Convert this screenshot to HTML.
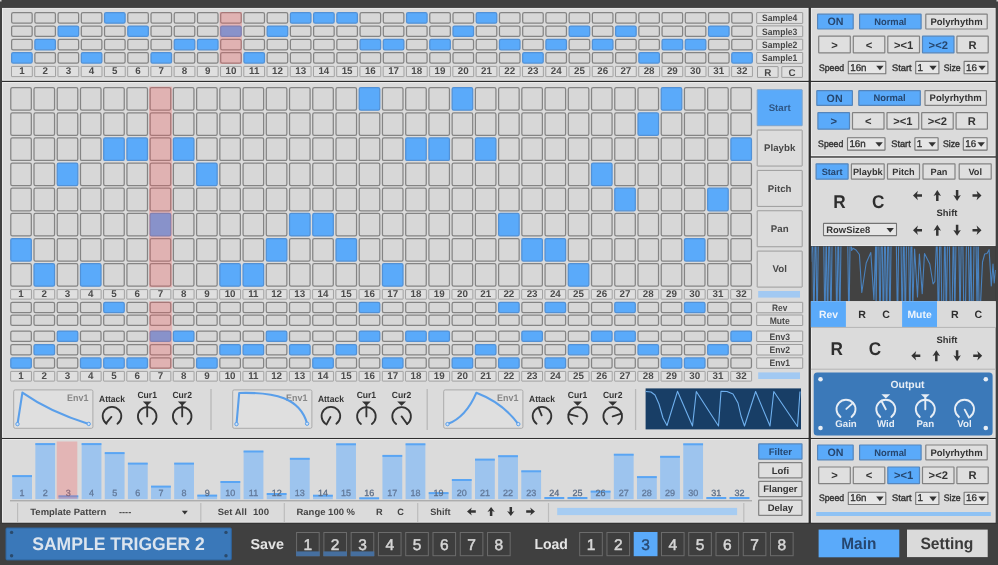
<!DOCTYPE html>
<html><head><meta charset="utf-8"><title>Sample Trigger 2</title>
<style>html,body{margin:0;padding:0;background:#404040;overflow:hidden}svg{display:block;will-change:transform}text{font-family:"Liberation Sans",sans-serif}</style>
</head><body><svg width="998" height="565" viewBox="0 0 998 565" font-family="Liberation Sans, sans-serif" text-rendering="geometricPrecision"><rect width="998" height="565" fill="#404040"/>
<rect x="0" y="0" width="1.5" height="1.5" fill="#cfcfcf"/>
<rect x="0" y="7" width="998" height="516.6" fill="#2e2e2e"/>
<rect x="2.00" y="7.70" width="806.60" height="73.10" fill="#ebebeb" />
<rect x="3.00" y="8.70" width="804.60" height="71.10" fill="#dbdbdb" />
<rect x="2.00" y="82.00" width="806.60" height="355.90" fill="#ebebeb" />
<rect x="3.00" y="83.00" width="804.60" height="353.90" fill="#dbdbdb" />
<rect x="2.00" y="439.00" width="806.60" height="83.70" fill="#ebebeb" />
<rect x="3.00" y="440.00" width="804.60" height="81.70" fill="#dbdbdb" />
<rect x="810.90" y="7.70" width="184.90" height="73.10" fill="#ebebeb" />
<rect x="811.90" y="8.70" width="182.90" height="71.10" fill="#dbdbdb" />
<rect x="810.90" y="82.00" width="184.90" height="74.10" fill="#ebebeb" />
<rect x="811.90" y="83.00" width="182.90" height="72.10" fill="#dbdbdb" />
<rect x="810.90" y="157.60" width="184.90" height="88.60" fill="#ebebeb" />
<rect x="811.90" y="158.60" width="182.90" height="86.60" fill="#dbdbdb" />
<rect x="810.90" y="156.10" width="184.90" height="1.50" fill="#6a6a6a" />
<rect x="810.90" y="246.20" width="184.90" height="55.00" fill="#424242" />
<rect x="810.90" y="301.20" width="184.90" height="136.70" fill="#ebebeb" />
<rect x="811.90" y="302.20" width="182.90" height="134.70" fill="#dbdbdb" />
<rect x="810.90" y="439.00" width="184.90" height="83.70" fill="#ebebeb" />
<rect x="811.90" y="440.00" width="182.90" height="81.70" fill="#dbdbdb" />
<rect x="0" y="0" width="998" height="7.7" fill="#404040"/>
<rect x="0" y="7" width="2" height="516.6" fill="#404040"/>
<rect x="995.8" y="7" width="2.2" height="516.6" fill="#404040"/>
<rect x="0" y="0" width="1.5" height="1.5" fill="#cfcfcf"/>
<rect x="996.5" y="0" width="1.5" height="1.5" fill="#cfcfcf"/>
<rect x="11.62" y="12.72" width="20.55" height="10.45" fill="#d7d7d7" stroke="#848484" stroke-width="1.25" rx="1.6" />
<rect x="34.86" y="12.72" width="20.55" height="10.45" fill="#d7d7d7" stroke="#848484" stroke-width="1.25" rx="1.6" />
<rect x="58.09" y="12.72" width="20.55" height="10.45" fill="#d7d7d7" stroke="#848484" stroke-width="1.25" rx="1.6" />
<rect x="81.31" y="12.72" width="20.55" height="10.45" fill="#d7d7d7" stroke="#848484" stroke-width="1.25" rx="1.6" />
<rect x="104.55" y="12.72" width="20.55" height="10.45" fill="#5aaafa" stroke="#5291d6" stroke-width="1.25" rx="1.6" />
<rect x="127.78" y="12.72" width="20.55" height="10.45" fill="#d7d7d7" stroke="#848484" stroke-width="1.25" rx="1.6" />
<rect x="151.00" y="12.72" width="20.55" height="10.45" fill="#d7d7d7" stroke="#848484" stroke-width="1.25" rx="1.6" />
<rect x="174.24" y="12.72" width="20.55" height="10.45" fill="#d7d7d7" stroke="#848484" stroke-width="1.25" rx="1.6" />
<rect x="197.47" y="12.72" width="20.55" height="10.45" fill="#d7d7d7" stroke="#848484" stroke-width="1.25" rx="1.6" />
<rect x="220.69" y="12.72" width="20.55" height="10.45" fill="#d7d7d7" stroke="#848484" stroke-width="1.25" rx="1.6" />
<rect x="243.93" y="12.72" width="20.55" height="10.45" fill="#d7d7d7" stroke="#848484" stroke-width="1.25" rx="1.6" />
<rect x="267.15" y="12.72" width="20.55" height="10.45" fill="#d7d7d7" stroke="#848484" stroke-width="1.25" rx="1.6" />
<rect x="290.38" y="12.72" width="20.55" height="10.45" fill="#5aaafa" stroke="#5291d6" stroke-width="1.25" rx="1.6" />
<rect x="313.62" y="12.72" width="20.55" height="10.45" fill="#5aaafa" stroke="#5291d6" stroke-width="1.25" rx="1.6" />
<rect x="336.85" y="12.72" width="20.55" height="10.45" fill="#5aaafa" stroke="#5291d6" stroke-width="1.25" rx="1.6" />
<rect x="360.07" y="12.72" width="20.55" height="10.45" fill="#d7d7d7" stroke="#848484" stroke-width="1.25" rx="1.6" />
<rect x="383.31" y="12.72" width="20.55" height="10.45" fill="#d7d7d7" stroke="#848484" stroke-width="1.25" rx="1.6" />
<rect x="406.54" y="12.72" width="20.55" height="10.45" fill="#5aaafa" stroke="#5291d6" stroke-width="1.25" rx="1.6" />
<rect x="429.76" y="12.72" width="20.55" height="10.45" fill="#d7d7d7" stroke="#848484" stroke-width="1.25" rx="1.6" />
<rect x="453.00" y="12.72" width="20.55" height="10.45" fill="#d7d7d7" stroke="#848484" stroke-width="1.25" rx="1.6" />
<rect x="476.23" y="12.72" width="20.55" height="10.45" fill="#5aaafa" stroke="#5291d6" stroke-width="1.25" rx="1.6" />
<rect x="499.45" y="12.72" width="20.55" height="10.45" fill="#d7d7d7" stroke="#848484" stroke-width="1.25" rx="1.6" />
<rect x="522.68" y="12.72" width="20.55" height="10.45" fill="#d7d7d7" stroke="#848484" stroke-width="1.25" rx="1.6" />
<rect x="545.91" y="12.72" width="20.55" height="10.45" fill="#d7d7d7" stroke="#848484" stroke-width="1.25" rx="1.6" />
<rect x="569.14" y="12.72" width="20.55" height="10.45" fill="#d7d7d7" stroke="#848484" stroke-width="1.25" rx="1.6" />
<rect x="592.38" y="12.72" width="20.55" height="10.45" fill="#d7d7d7" stroke="#848484" stroke-width="1.25" rx="1.6" />
<rect x="615.61" y="12.72" width="20.55" height="10.45" fill="#d7d7d7" stroke="#848484" stroke-width="1.25" rx="1.6" />
<rect x="638.84" y="12.72" width="20.55" height="10.45" fill="#d7d7d7" stroke="#848484" stroke-width="1.25" rx="1.6" />
<rect x="662.07" y="12.72" width="20.55" height="10.45" fill="#d7d7d7" stroke="#848484" stroke-width="1.25" rx="1.6" />
<rect x="685.29" y="12.72" width="20.55" height="10.45" fill="#d7d7d7" stroke="#848484" stroke-width="1.25" rx="1.6" />
<rect x="708.52" y="12.72" width="20.55" height="10.45" fill="#d7d7d7" stroke="#848484" stroke-width="1.25" rx="1.6" />
<rect x="731.75" y="12.72" width="20.55" height="10.45" fill="#d7d7d7" stroke="#848484" stroke-width="1.25" rx="1.6" />
<rect x="11.62" y="26.02" width="20.55" height="10.45" fill="#d7d7d7" stroke="#848484" stroke-width="1.25" rx="1.6" />
<rect x="34.86" y="26.02" width="20.55" height="10.45" fill="#d7d7d7" stroke="#848484" stroke-width="1.25" rx="1.6" />
<rect x="58.09" y="26.02" width="20.55" height="10.45" fill="#5aaafa" stroke="#5291d6" stroke-width="1.25" rx="1.6" />
<rect x="81.31" y="26.02" width="20.55" height="10.45" fill="#d7d7d7" stroke="#848484" stroke-width="1.25" rx="1.6" />
<rect x="104.55" y="26.02" width="20.55" height="10.45" fill="#d7d7d7" stroke="#848484" stroke-width="1.25" rx="1.6" />
<rect x="127.78" y="26.02" width="20.55" height="10.45" fill="#5aaafa" stroke="#5291d6" stroke-width="1.25" rx="1.6" />
<rect x="151.00" y="26.02" width="20.55" height="10.45" fill="#d7d7d7" stroke="#848484" stroke-width="1.25" rx="1.6" />
<rect x="174.24" y="26.02" width="20.55" height="10.45" fill="#d7d7d7" stroke="#848484" stroke-width="1.25" rx="1.6" />
<rect x="197.47" y="26.02" width="20.55" height="10.45" fill="#d7d7d7" stroke="#848484" stroke-width="1.25" rx="1.6" />
<rect x="220.69" y="26.02" width="20.55" height="10.45" fill="#5aaafa" stroke="#5291d6" stroke-width="1.25" rx="1.6" />
<rect x="243.93" y="26.02" width="20.55" height="10.45" fill="#d7d7d7" stroke="#848484" stroke-width="1.25" rx="1.6" />
<rect x="267.15" y="26.02" width="20.55" height="10.45" fill="#5aaafa" stroke="#5291d6" stroke-width="1.25" rx="1.6" />
<rect x="290.38" y="26.02" width="20.55" height="10.45" fill="#d7d7d7" stroke="#848484" stroke-width="1.25" rx="1.6" />
<rect x="313.62" y="26.02" width="20.55" height="10.45" fill="#d7d7d7" stroke="#848484" stroke-width="1.25" rx="1.6" />
<rect x="336.85" y="26.02" width="20.55" height="10.45" fill="#d7d7d7" stroke="#848484" stroke-width="1.25" rx="1.6" />
<rect x="360.07" y="26.02" width="20.55" height="10.45" fill="#d7d7d7" stroke="#848484" stroke-width="1.25" rx="1.6" />
<rect x="383.31" y="26.02" width="20.55" height="10.45" fill="#d7d7d7" stroke="#848484" stroke-width="1.25" rx="1.6" />
<rect x="406.54" y="26.02" width="20.55" height="10.45" fill="#d7d7d7" stroke="#848484" stroke-width="1.25" rx="1.6" />
<rect x="429.76" y="26.02" width="20.55" height="10.45" fill="#d7d7d7" stroke="#848484" stroke-width="1.25" rx="1.6" />
<rect x="453.00" y="26.02" width="20.55" height="10.45" fill="#5aaafa" stroke="#5291d6" stroke-width="1.25" rx="1.6" />
<rect x="476.23" y="26.02" width="20.55" height="10.45" fill="#d7d7d7" stroke="#848484" stroke-width="1.25" rx="1.6" />
<rect x="499.45" y="26.02" width="20.55" height="10.45" fill="#d7d7d7" stroke="#848484" stroke-width="1.25" rx="1.6" />
<rect x="522.68" y="26.02" width="20.55" height="10.45" fill="#d7d7d7" stroke="#848484" stroke-width="1.25" rx="1.6" />
<rect x="545.91" y="26.02" width="20.55" height="10.45" fill="#d7d7d7" stroke="#848484" stroke-width="1.25" rx="1.6" />
<rect x="569.14" y="26.02" width="20.55" height="10.45" fill="#5aaafa" stroke="#5291d6" stroke-width="1.25" rx="1.6" />
<rect x="592.38" y="26.02" width="20.55" height="10.45" fill="#d7d7d7" stroke="#848484" stroke-width="1.25" rx="1.6" />
<rect x="615.61" y="26.02" width="20.55" height="10.45" fill="#5aaafa" stroke="#5291d6" stroke-width="1.25" rx="1.6" />
<rect x="638.84" y="26.02" width="20.55" height="10.45" fill="#d7d7d7" stroke="#848484" stroke-width="1.25" rx="1.6" />
<rect x="662.07" y="26.02" width="20.55" height="10.45" fill="#d7d7d7" stroke="#848484" stroke-width="1.25" rx="1.6" />
<rect x="685.29" y="26.02" width="20.55" height="10.45" fill="#d7d7d7" stroke="#848484" stroke-width="1.25" rx="1.6" />
<rect x="708.52" y="26.02" width="20.55" height="10.45" fill="#5aaafa" stroke="#5291d6" stroke-width="1.25" rx="1.6" />
<rect x="731.75" y="26.02" width="20.55" height="10.45" fill="#d7d7d7" stroke="#848484" stroke-width="1.25" rx="1.6" />
<rect x="11.62" y="39.33" width="20.55" height="10.45" fill="#d7d7d7" stroke="#848484" stroke-width="1.25" rx="1.6" />
<rect x="34.86" y="39.33" width="20.55" height="10.45" fill="#5aaafa" stroke="#5291d6" stroke-width="1.25" rx="1.6" />
<rect x="58.09" y="39.33" width="20.55" height="10.45" fill="#d7d7d7" stroke="#848484" stroke-width="1.25" rx="1.6" />
<rect x="81.31" y="39.33" width="20.55" height="10.45" fill="#d7d7d7" stroke="#848484" stroke-width="1.25" rx="1.6" />
<rect x="104.55" y="39.33" width="20.55" height="10.45" fill="#d7d7d7" stroke="#848484" stroke-width="1.25" rx="1.6" />
<rect x="127.78" y="39.33" width="20.55" height="10.45" fill="#d7d7d7" stroke="#848484" stroke-width="1.25" rx="1.6" />
<rect x="151.00" y="39.33" width="20.55" height="10.45" fill="#d7d7d7" stroke="#848484" stroke-width="1.25" rx="1.6" />
<rect x="174.24" y="39.33" width="20.55" height="10.45" fill="#5aaafa" stroke="#5291d6" stroke-width="1.25" rx="1.6" />
<rect x="197.47" y="39.33" width="20.55" height="10.45" fill="#5aaafa" stroke="#5291d6" stroke-width="1.25" rx="1.6" />
<rect x="220.69" y="39.33" width="20.55" height="10.45" fill="#d7d7d7" stroke="#848484" stroke-width="1.25" rx="1.6" />
<rect x="243.93" y="39.33" width="20.55" height="10.45" fill="#d7d7d7" stroke="#848484" stroke-width="1.25" rx="1.6" />
<rect x="267.15" y="39.33" width="20.55" height="10.45" fill="#d7d7d7" stroke="#848484" stroke-width="1.25" rx="1.6" />
<rect x="290.38" y="39.33" width="20.55" height="10.45" fill="#d7d7d7" stroke="#848484" stroke-width="1.25" rx="1.6" />
<rect x="313.62" y="39.33" width="20.55" height="10.45" fill="#d7d7d7" stroke="#848484" stroke-width="1.25" rx="1.6" />
<rect x="336.85" y="39.33" width="20.55" height="10.45" fill="#d7d7d7" stroke="#848484" stroke-width="1.25" rx="1.6" />
<rect x="360.07" y="39.33" width="20.55" height="10.45" fill="#5aaafa" stroke="#5291d6" stroke-width="1.25" rx="1.6" />
<rect x="383.31" y="39.33" width="20.55" height="10.45" fill="#5aaafa" stroke="#5291d6" stroke-width="1.25" rx="1.6" />
<rect x="406.54" y="39.33" width="20.55" height="10.45" fill="#d7d7d7" stroke="#848484" stroke-width="1.25" rx="1.6" />
<rect x="429.76" y="39.33" width="20.55" height="10.45" fill="#5aaafa" stroke="#5291d6" stroke-width="1.25" rx="1.6" />
<rect x="453.00" y="39.33" width="20.55" height="10.45" fill="#d7d7d7" stroke="#848484" stroke-width="1.25" rx="1.6" />
<rect x="476.23" y="39.33" width="20.55" height="10.45" fill="#d7d7d7" stroke="#848484" stroke-width="1.25" rx="1.6" />
<rect x="499.45" y="39.33" width="20.55" height="10.45" fill="#5aaafa" stroke="#5291d6" stroke-width="1.25" rx="1.6" />
<rect x="522.68" y="39.33" width="20.55" height="10.45" fill="#d7d7d7" stroke="#848484" stroke-width="1.25" rx="1.6" />
<rect x="545.91" y="39.33" width="20.55" height="10.45" fill="#5aaafa" stroke="#5291d6" stroke-width="1.25" rx="1.6" />
<rect x="569.14" y="39.33" width="20.55" height="10.45" fill="#d7d7d7" stroke="#848484" stroke-width="1.25" rx="1.6" />
<rect x="592.38" y="39.33" width="20.55" height="10.45" fill="#5aaafa" stroke="#5291d6" stroke-width="1.25" rx="1.6" />
<rect x="615.61" y="39.33" width="20.55" height="10.45" fill="#d7d7d7" stroke="#848484" stroke-width="1.25" rx="1.6" />
<rect x="638.84" y="39.33" width="20.55" height="10.45" fill="#d7d7d7" stroke="#848484" stroke-width="1.25" rx="1.6" />
<rect x="662.07" y="39.33" width="20.55" height="10.45" fill="#5aaafa" stroke="#5291d6" stroke-width="1.25" rx="1.6" />
<rect x="685.29" y="39.33" width="20.55" height="10.45" fill="#5aaafa" stroke="#5291d6" stroke-width="1.25" rx="1.6" />
<rect x="708.52" y="39.33" width="20.55" height="10.45" fill="#d7d7d7" stroke="#848484" stroke-width="1.25" rx="1.6" />
<rect x="731.75" y="39.33" width="20.55" height="10.45" fill="#d7d7d7" stroke="#848484" stroke-width="1.25" rx="1.6" />
<rect x="11.62" y="52.62" width="20.55" height="10.45" fill="#5aaafa" stroke="#5291d6" stroke-width="1.25" rx="1.6" />
<rect x="34.86" y="52.62" width="20.55" height="10.45" fill="#d7d7d7" stroke="#848484" stroke-width="1.25" rx="1.6" />
<rect x="58.09" y="52.62" width="20.55" height="10.45" fill="#d7d7d7" stroke="#848484" stroke-width="1.25" rx="1.6" />
<rect x="81.31" y="52.62" width="20.55" height="10.45" fill="#5aaafa" stroke="#5291d6" stroke-width="1.25" rx="1.6" />
<rect x="104.55" y="52.62" width="20.55" height="10.45" fill="#d7d7d7" stroke="#848484" stroke-width="1.25" rx="1.6" />
<rect x="127.78" y="52.62" width="20.55" height="10.45" fill="#d7d7d7" stroke="#848484" stroke-width="1.25" rx="1.6" />
<rect x="151.00" y="52.62" width="20.55" height="10.45" fill="#5aaafa" stroke="#5291d6" stroke-width="1.25" rx="1.6" />
<rect x="174.24" y="52.62" width="20.55" height="10.45" fill="#d7d7d7" stroke="#848484" stroke-width="1.25" rx="1.6" />
<rect x="197.47" y="52.62" width="20.55" height="10.45" fill="#d7d7d7" stroke="#848484" stroke-width="1.25" rx="1.6" />
<rect x="220.69" y="52.62" width="20.55" height="10.45" fill="#d7d7d7" stroke="#848484" stroke-width="1.25" rx="1.6" />
<rect x="243.93" y="52.62" width="20.55" height="10.45" fill="#5aaafa" stroke="#5291d6" stroke-width="1.25" rx="1.6" />
<rect x="267.15" y="52.62" width="20.55" height="10.45" fill="#d7d7d7" stroke="#848484" stroke-width="1.25" rx="1.6" />
<rect x="290.38" y="52.62" width="20.55" height="10.45" fill="#d7d7d7" stroke="#848484" stroke-width="1.25" rx="1.6" />
<rect x="313.62" y="52.62" width="20.55" height="10.45" fill="#d7d7d7" stroke="#848484" stroke-width="1.25" rx="1.6" />
<rect x="336.85" y="52.62" width="20.55" height="10.45" fill="#d7d7d7" stroke="#848484" stroke-width="1.25" rx="1.6" />
<rect x="360.07" y="52.62" width="20.55" height="10.45" fill="#d7d7d7" stroke="#848484" stroke-width="1.25" rx="1.6" />
<rect x="383.31" y="52.62" width="20.55" height="10.45" fill="#d7d7d7" stroke="#848484" stroke-width="1.25" rx="1.6" />
<rect x="406.54" y="52.62" width="20.55" height="10.45" fill="#d7d7d7" stroke="#848484" stroke-width="1.25" rx="1.6" />
<rect x="429.76" y="52.62" width="20.55" height="10.45" fill="#d7d7d7" stroke="#848484" stroke-width="1.25" rx="1.6" />
<rect x="453.00" y="52.62" width="20.55" height="10.45" fill="#d7d7d7" stroke="#848484" stroke-width="1.25" rx="1.6" />
<rect x="476.23" y="52.62" width="20.55" height="10.45" fill="#d7d7d7" stroke="#848484" stroke-width="1.25" rx="1.6" />
<rect x="499.45" y="52.62" width="20.55" height="10.45" fill="#d7d7d7" stroke="#848484" stroke-width="1.25" rx="1.6" />
<rect x="522.68" y="52.62" width="20.55" height="10.45" fill="#5aaafa" stroke="#5291d6" stroke-width="1.25" rx="1.6" />
<rect x="545.91" y="52.62" width="20.55" height="10.45" fill="#d7d7d7" stroke="#848484" stroke-width="1.25" rx="1.6" />
<rect x="569.14" y="52.62" width="20.55" height="10.45" fill="#d7d7d7" stroke="#848484" stroke-width="1.25" rx="1.6" />
<rect x="592.38" y="52.62" width="20.55" height="10.45" fill="#d7d7d7" stroke="#848484" stroke-width="1.25" rx="1.6" />
<rect x="615.61" y="52.62" width="20.55" height="10.45" fill="#d7d7d7" stroke="#848484" stroke-width="1.25" rx="1.6" />
<rect x="638.84" y="52.62" width="20.55" height="10.45" fill="#5aaafa" stroke="#5291d6" stroke-width="1.25" rx="1.6" />
<rect x="662.07" y="52.62" width="20.55" height="10.45" fill="#d7d7d7" stroke="#848484" stroke-width="1.25" rx="1.6" />
<rect x="685.29" y="52.62" width="20.55" height="10.45" fill="#d7d7d7" stroke="#848484" stroke-width="1.25" rx="1.6" />
<rect x="708.52" y="52.62" width="20.55" height="10.45" fill="#d7d7d7" stroke="#848484" stroke-width="1.25" rx="1.6" />
<rect x="731.75" y="52.62" width="20.55" height="10.45" fill="#5aaafa" stroke="#5291d6" stroke-width="1.25" rx="1.6" />
<rect x="11.50" y="66.40" width="20.80" height="10.20" fill="#dfdfdf" stroke="#a2a2a2" stroke-width="1" rx="0.3" />
<text x="21.90" y="74.10" font-size="9.8" font-weight="bold" fill="#4c4c4c" text-anchor="middle" >1</text>
<rect x="34.73" y="66.40" width="20.80" height="10.20" fill="#dfdfdf" stroke="#a2a2a2" stroke-width="1" rx="0.3" />
<text x="45.13" y="74.10" font-size="9.8" font-weight="bold" fill="#4c4c4c" text-anchor="middle" >2</text>
<rect x="57.96" y="66.40" width="20.80" height="10.20" fill="#dfdfdf" stroke="#a2a2a2" stroke-width="1" rx="0.3" />
<text x="68.36" y="74.10" font-size="9.8" font-weight="bold" fill="#4c4c4c" text-anchor="middle" >3</text>
<rect x="81.19" y="66.40" width="20.80" height="10.20" fill="#dfdfdf" stroke="#a2a2a2" stroke-width="1" rx="0.3" />
<text x="91.59" y="74.10" font-size="9.8" font-weight="bold" fill="#4c4c4c" text-anchor="middle" >4</text>
<rect x="104.42" y="66.40" width="20.80" height="10.20" fill="#dfdfdf" stroke="#a2a2a2" stroke-width="1" rx="0.3" />
<text x="114.82" y="74.10" font-size="9.8" font-weight="bold" fill="#4c4c4c" text-anchor="middle" >5</text>
<rect x="127.65" y="66.40" width="20.80" height="10.20" fill="#dfdfdf" stroke="#a2a2a2" stroke-width="1" rx="0.3" />
<text x="138.05" y="74.10" font-size="9.8" font-weight="bold" fill="#4c4c4c" text-anchor="middle" >6</text>
<rect x="150.88" y="66.40" width="20.80" height="10.20" fill="#dfdfdf" stroke="#a2a2a2" stroke-width="1" rx="0.3" />
<text x="161.28" y="74.10" font-size="9.8" font-weight="bold" fill="#4c4c4c" text-anchor="middle" >7</text>
<rect x="174.11" y="66.40" width="20.80" height="10.20" fill="#dfdfdf" stroke="#a2a2a2" stroke-width="1" rx="0.3" />
<text x="184.51" y="74.10" font-size="9.8" font-weight="bold" fill="#4c4c4c" text-anchor="middle" >8</text>
<rect x="197.34" y="66.40" width="20.80" height="10.20" fill="#dfdfdf" stroke="#a2a2a2" stroke-width="1" rx="0.3" />
<text x="207.74" y="74.10" font-size="9.8" font-weight="bold" fill="#4c4c4c" text-anchor="middle" >9</text>
<rect x="220.57" y="66.40" width="20.80" height="10.20" fill="#dfdfdf" stroke="#a2a2a2" stroke-width="1" rx="0.3" />
<text x="230.97" y="74.10" font-size="9.8" font-weight="bold" fill="#4c4c4c" text-anchor="middle" >10</text>
<rect x="243.80" y="66.40" width="20.80" height="10.20" fill="#dfdfdf" stroke="#a2a2a2" stroke-width="1" rx="0.3" />
<text x="254.20" y="74.10" font-size="9.8" font-weight="bold" fill="#4c4c4c" text-anchor="middle" >11</text>
<rect x="267.03" y="66.40" width="20.80" height="10.20" fill="#dfdfdf" stroke="#a2a2a2" stroke-width="1" rx="0.3" />
<text x="277.43" y="74.10" font-size="9.8" font-weight="bold" fill="#4c4c4c" text-anchor="middle" >12</text>
<rect x="290.26" y="66.40" width="20.80" height="10.20" fill="#dfdfdf" stroke="#a2a2a2" stroke-width="1" rx="0.3" />
<text x="300.66" y="74.10" font-size="9.8" font-weight="bold" fill="#4c4c4c" text-anchor="middle" >13</text>
<rect x="313.49" y="66.40" width="20.80" height="10.20" fill="#dfdfdf" stroke="#a2a2a2" stroke-width="1" rx="0.3" />
<text x="323.89" y="74.10" font-size="9.8" font-weight="bold" fill="#4c4c4c" text-anchor="middle" >14</text>
<rect x="336.72" y="66.40" width="20.80" height="10.20" fill="#dfdfdf" stroke="#a2a2a2" stroke-width="1" rx="0.3" />
<text x="347.12" y="74.10" font-size="9.8" font-weight="bold" fill="#4c4c4c" text-anchor="middle" >15</text>
<rect x="359.95" y="66.40" width="20.80" height="10.20" fill="#dfdfdf" stroke="#a2a2a2" stroke-width="1" rx="0.3" />
<text x="370.35" y="74.10" font-size="9.8" font-weight="bold" fill="#4c4c4c" text-anchor="middle" >16</text>
<rect x="383.18" y="66.40" width="20.80" height="10.20" fill="#dfdfdf" stroke="#a2a2a2" stroke-width="1" rx="0.3" />
<text x="393.58" y="74.10" font-size="9.8" font-weight="bold" fill="#4c4c4c" text-anchor="middle" >17</text>
<rect x="406.41" y="66.40" width="20.80" height="10.20" fill="#dfdfdf" stroke="#a2a2a2" stroke-width="1" rx="0.3" />
<text x="416.81" y="74.10" font-size="9.8" font-weight="bold" fill="#4c4c4c" text-anchor="middle" >18</text>
<rect x="429.64" y="66.40" width="20.80" height="10.20" fill="#dfdfdf" stroke="#a2a2a2" stroke-width="1" rx="0.3" />
<text x="440.04" y="74.10" font-size="9.8" font-weight="bold" fill="#4c4c4c" text-anchor="middle" >19</text>
<rect x="452.87" y="66.40" width="20.80" height="10.20" fill="#dfdfdf" stroke="#a2a2a2" stroke-width="1" rx="0.3" />
<text x="463.27" y="74.10" font-size="9.8" font-weight="bold" fill="#4c4c4c" text-anchor="middle" >20</text>
<rect x="476.10" y="66.40" width="20.80" height="10.20" fill="#dfdfdf" stroke="#a2a2a2" stroke-width="1" rx="0.3" />
<text x="486.50" y="74.10" font-size="9.8" font-weight="bold" fill="#4c4c4c" text-anchor="middle" >21</text>
<rect x="499.33" y="66.40" width="20.80" height="10.20" fill="#dfdfdf" stroke="#a2a2a2" stroke-width="1" rx="0.3" />
<text x="509.73" y="74.10" font-size="9.8" font-weight="bold" fill="#4c4c4c" text-anchor="middle" >22</text>
<rect x="522.56" y="66.40" width="20.80" height="10.20" fill="#dfdfdf" stroke="#a2a2a2" stroke-width="1" rx="0.3" />
<text x="532.96" y="74.10" font-size="9.8" font-weight="bold" fill="#4c4c4c" text-anchor="middle" >23</text>
<rect x="545.79" y="66.40" width="20.80" height="10.20" fill="#dfdfdf" stroke="#a2a2a2" stroke-width="1" rx="0.3" />
<text x="556.19" y="74.10" font-size="9.8" font-weight="bold" fill="#4c4c4c" text-anchor="middle" >24</text>
<rect x="569.02" y="66.40" width="20.80" height="10.20" fill="#dfdfdf" stroke="#a2a2a2" stroke-width="1" rx="0.3" />
<text x="579.42" y="74.10" font-size="9.8" font-weight="bold" fill="#4c4c4c" text-anchor="middle" >25</text>
<rect x="592.25" y="66.40" width="20.80" height="10.20" fill="#dfdfdf" stroke="#a2a2a2" stroke-width="1" rx="0.3" />
<text x="602.65" y="74.10" font-size="9.8" font-weight="bold" fill="#4c4c4c" text-anchor="middle" >26</text>
<rect x="615.48" y="66.40" width="20.80" height="10.20" fill="#dfdfdf" stroke="#a2a2a2" stroke-width="1" rx="0.3" />
<text x="625.88" y="74.10" font-size="9.8" font-weight="bold" fill="#4c4c4c" text-anchor="middle" >27</text>
<rect x="638.71" y="66.40" width="20.80" height="10.20" fill="#dfdfdf" stroke="#a2a2a2" stroke-width="1" rx="0.3" />
<text x="649.11" y="74.10" font-size="9.8" font-weight="bold" fill="#4c4c4c" text-anchor="middle" >28</text>
<rect x="661.94" y="66.40" width="20.80" height="10.20" fill="#dfdfdf" stroke="#a2a2a2" stroke-width="1" rx="0.3" />
<text x="672.34" y="74.10" font-size="9.8" font-weight="bold" fill="#4c4c4c" text-anchor="middle" >29</text>
<rect x="685.17" y="66.40" width="20.80" height="10.20" fill="#dfdfdf" stroke="#a2a2a2" stroke-width="1" rx="0.3" />
<text x="695.57" y="74.10" font-size="9.8" font-weight="bold" fill="#4c4c4c" text-anchor="middle" >30</text>
<rect x="708.40" y="66.40" width="20.80" height="10.20" fill="#dfdfdf" stroke="#a2a2a2" stroke-width="1" rx="0.3" />
<text x="718.80" y="74.10" font-size="9.8" font-weight="bold" fill="#4c4c4c" text-anchor="middle" >31</text>
<rect x="731.63" y="66.40" width="20.80" height="10.20" fill="#dfdfdf" stroke="#a2a2a2" stroke-width="1" rx="0.3" />
<text x="742.03" y="74.10" font-size="9.8" font-weight="bold" fill="#4c4c4c" text-anchor="middle" >32</text>
<rect x="756.70" y="12.60" width="46.00" height="10.80" fill="#dfdfdf" stroke="#9c9c9c" stroke-width="1" rx="0.3" />
<text x="779.70" y="21.30" font-size="9.3" font-weight="bold" fill="#484848" text-anchor="middle" textLength="35.3" lengthAdjust="spacingAndGlyphs">Sample4</text>
<rect x="756.70" y="25.90" width="46.00" height="10.80" fill="#dfdfdf" stroke="#9c9c9c" stroke-width="1" rx="0.3" />
<text x="779.70" y="34.60" font-size="9.3" font-weight="bold" fill="#484848" text-anchor="middle" textLength="35.3" lengthAdjust="spacingAndGlyphs">Sample3</text>
<rect x="756.70" y="39.20" width="46.00" height="10.80" fill="#dfdfdf" stroke="#9c9c9c" stroke-width="1" rx="0.3" />
<text x="779.70" y="47.90" font-size="9.3" font-weight="bold" fill="#484848" text-anchor="middle" textLength="35.3" lengthAdjust="spacingAndGlyphs">Sample2</text>
<rect x="756.70" y="52.50" width="46.00" height="10.80" fill="#dfdfdf" stroke="#9c9c9c" stroke-width="1" rx="0.3" />
<text x="779.70" y="61.20" font-size="9.3" font-weight="bold" fill="#484848" text-anchor="middle" textLength="35.3" lengthAdjust="spacingAndGlyphs">Sample1</text>
<rect x="757.50" y="66.60" width="20.60" height="10.80" fill="#dfdfdf" stroke="#9c9c9c" stroke-width="1" rx="0.3" />
<text x="767.80" y="75.60" font-size="9.8" font-weight="bold" fill="#484848" text-anchor="middle" >R</text>
<rect x="781.80" y="66.60" width="20.60" height="10.80" fill="#dfdfdf" stroke="#9c9c9c" stroke-width="1" rx="0.3" />
<text x="792.10" y="75.60" font-size="9.8" font-weight="bold" fill="#484848" text-anchor="middle" >C</text>
<rect x="10.78" y="87.62" width="20.55" height="22.55" fill="#d7d7d7" stroke="#848484" stroke-width="1.25" rx="1.6" />
<rect x="34.01" y="87.62" width="20.55" height="22.55" fill="#d7d7d7" stroke="#848484" stroke-width="1.25" rx="1.6" />
<rect x="57.23" y="87.62" width="20.55" height="22.55" fill="#d7d7d7" stroke="#848484" stroke-width="1.25" rx="1.6" />
<rect x="80.47" y="87.62" width="20.55" height="22.55" fill="#d7d7d7" stroke="#848484" stroke-width="1.25" rx="1.6" />
<rect x="103.70" y="87.62" width="20.55" height="22.55" fill="#d7d7d7" stroke="#848484" stroke-width="1.25" rx="1.6" />
<rect x="126.93" y="87.62" width="20.55" height="22.55" fill="#d7d7d7" stroke="#848484" stroke-width="1.25" rx="1.6" />
<rect x="150.16" y="87.62" width="20.55" height="22.55" fill="#d7d7d7" stroke="#848484" stroke-width="1.25" rx="1.6" />
<rect x="173.39" y="87.62" width="20.55" height="22.55" fill="#d7d7d7" stroke="#848484" stroke-width="1.25" rx="1.6" />
<rect x="196.62" y="87.62" width="20.55" height="22.55" fill="#d7d7d7" stroke="#848484" stroke-width="1.25" rx="1.6" />
<rect x="219.84" y="87.62" width="20.55" height="22.55" fill="#d7d7d7" stroke="#848484" stroke-width="1.25" rx="1.6" />
<rect x="243.08" y="87.62" width="20.55" height="22.55" fill="#d7d7d7" stroke="#848484" stroke-width="1.25" rx="1.6" />
<rect x="266.30" y="87.62" width="20.55" height="22.55" fill="#d7d7d7" stroke="#848484" stroke-width="1.25" rx="1.6" />
<rect x="289.53" y="87.62" width="20.55" height="22.55" fill="#d7d7d7" stroke="#848484" stroke-width="1.25" rx="1.6" />
<rect x="312.76" y="87.62" width="20.55" height="22.55" fill="#d7d7d7" stroke="#848484" stroke-width="1.25" rx="1.6" />
<rect x="336.00" y="87.62" width="20.55" height="22.55" fill="#d7d7d7" stroke="#848484" stroke-width="1.25" rx="1.6" />
<rect x="359.22" y="87.62" width="20.55" height="22.55" fill="#5aaafa" stroke="#5291d6" stroke-width="1.25" rx="1.6" />
<rect x="382.45" y="87.62" width="20.55" height="22.55" fill="#d7d7d7" stroke="#848484" stroke-width="1.25" rx="1.6" />
<rect x="405.69" y="87.62" width="20.55" height="22.55" fill="#d7d7d7" stroke="#848484" stroke-width="1.25" rx="1.6" />
<rect x="428.91" y="87.62" width="20.55" height="22.55" fill="#d7d7d7" stroke="#848484" stroke-width="1.25" rx="1.6" />
<rect x="452.14" y="87.62" width="20.55" height="22.55" fill="#5aaafa" stroke="#5291d6" stroke-width="1.25" rx="1.6" />
<rect x="475.38" y="87.62" width="20.55" height="22.55" fill="#d7d7d7" stroke="#848484" stroke-width="1.25" rx="1.6" />
<rect x="498.60" y="87.62" width="20.55" height="22.55" fill="#d7d7d7" stroke="#848484" stroke-width="1.25" rx="1.6" />
<rect x="521.83" y="87.62" width="20.55" height="22.55" fill="#d7d7d7" stroke="#848484" stroke-width="1.25" rx="1.6" />
<rect x="545.06" y="87.62" width="20.55" height="22.55" fill="#d7d7d7" stroke="#848484" stroke-width="1.25" rx="1.6" />
<rect x="568.29" y="87.62" width="20.55" height="22.55" fill="#d7d7d7" stroke="#848484" stroke-width="1.25" rx="1.6" />
<rect x="591.52" y="87.62" width="20.55" height="22.55" fill="#d7d7d7" stroke="#848484" stroke-width="1.25" rx="1.6" />
<rect x="614.75" y="87.62" width="20.55" height="22.55" fill="#d7d7d7" stroke="#848484" stroke-width="1.25" rx="1.6" />
<rect x="637.99" y="87.62" width="20.55" height="22.55" fill="#d7d7d7" stroke="#848484" stroke-width="1.25" rx="1.6" />
<rect x="661.22" y="87.62" width="20.55" height="22.55" fill="#5aaafa" stroke="#5291d6" stroke-width="1.25" rx="1.6" />
<rect x="684.44" y="87.62" width="20.55" height="22.55" fill="#d7d7d7" stroke="#848484" stroke-width="1.25" rx="1.6" />
<rect x="707.67" y="87.62" width="20.55" height="22.55" fill="#d7d7d7" stroke="#848484" stroke-width="1.25" rx="1.6" />
<rect x="730.90" y="87.62" width="20.55" height="22.55" fill="#d7d7d7" stroke="#848484" stroke-width="1.25" rx="1.6" />
<rect x="10.78" y="112.78" width="20.55" height="22.55" fill="#d7d7d7" stroke="#848484" stroke-width="1.25" rx="1.6" />
<rect x="34.01" y="112.78" width="20.55" height="22.55" fill="#d7d7d7" stroke="#848484" stroke-width="1.25" rx="1.6" />
<rect x="57.23" y="112.78" width="20.55" height="22.55" fill="#d7d7d7" stroke="#848484" stroke-width="1.25" rx="1.6" />
<rect x="80.47" y="112.78" width="20.55" height="22.55" fill="#d7d7d7" stroke="#848484" stroke-width="1.25" rx="1.6" />
<rect x="103.70" y="112.78" width="20.55" height="22.55" fill="#d7d7d7" stroke="#848484" stroke-width="1.25" rx="1.6" />
<rect x="126.93" y="112.78" width="20.55" height="22.55" fill="#d7d7d7" stroke="#848484" stroke-width="1.25" rx="1.6" />
<rect x="150.16" y="112.78" width="20.55" height="22.55" fill="#d7d7d7" stroke="#848484" stroke-width="1.25" rx="1.6" />
<rect x="173.39" y="112.78" width="20.55" height="22.55" fill="#d7d7d7" stroke="#848484" stroke-width="1.25" rx="1.6" />
<rect x="196.62" y="112.78" width="20.55" height="22.55" fill="#d7d7d7" stroke="#848484" stroke-width="1.25" rx="1.6" />
<rect x="219.84" y="112.78" width="20.55" height="22.55" fill="#d7d7d7" stroke="#848484" stroke-width="1.25" rx="1.6" />
<rect x="243.08" y="112.78" width="20.55" height="22.55" fill="#d7d7d7" stroke="#848484" stroke-width="1.25" rx="1.6" />
<rect x="266.30" y="112.78" width="20.55" height="22.55" fill="#d7d7d7" stroke="#848484" stroke-width="1.25" rx="1.6" />
<rect x="289.53" y="112.78" width="20.55" height="22.55" fill="#d7d7d7" stroke="#848484" stroke-width="1.25" rx="1.6" />
<rect x="312.76" y="112.78" width="20.55" height="22.55" fill="#d7d7d7" stroke="#848484" stroke-width="1.25" rx="1.6" />
<rect x="336.00" y="112.78" width="20.55" height="22.55" fill="#d7d7d7" stroke="#848484" stroke-width="1.25" rx="1.6" />
<rect x="359.22" y="112.78" width="20.55" height="22.55" fill="#d7d7d7" stroke="#848484" stroke-width="1.25" rx="1.6" />
<rect x="382.45" y="112.78" width="20.55" height="22.55" fill="#d7d7d7" stroke="#848484" stroke-width="1.25" rx="1.6" />
<rect x="405.69" y="112.78" width="20.55" height="22.55" fill="#d7d7d7" stroke="#848484" stroke-width="1.25" rx="1.6" />
<rect x="428.91" y="112.78" width="20.55" height="22.55" fill="#d7d7d7" stroke="#848484" stroke-width="1.25" rx="1.6" />
<rect x="452.14" y="112.78" width="20.55" height="22.55" fill="#d7d7d7" stroke="#848484" stroke-width="1.25" rx="1.6" />
<rect x="475.38" y="112.78" width="20.55" height="22.55" fill="#d7d7d7" stroke="#848484" stroke-width="1.25" rx="1.6" />
<rect x="498.60" y="112.78" width="20.55" height="22.55" fill="#d7d7d7" stroke="#848484" stroke-width="1.25" rx="1.6" />
<rect x="521.83" y="112.78" width="20.55" height="22.55" fill="#d7d7d7" stroke="#848484" stroke-width="1.25" rx="1.6" />
<rect x="545.06" y="112.78" width="20.55" height="22.55" fill="#d7d7d7" stroke="#848484" stroke-width="1.25" rx="1.6" />
<rect x="568.29" y="112.78" width="20.55" height="22.55" fill="#d7d7d7" stroke="#848484" stroke-width="1.25" rx="1.6" />
<rect x="591.52" y="112.78" width="20.55" height="22.55" fill="#d7d7d7" stroke="#848484" stroke-width="1.25" rx="1.6" />
<rect x="614.75" y="112.78" width="20.55" height="22.55" fill="#d7d7d7" stroke="#848484" stroke-width="1.25" rx="1.6" />
<rect x="637.99" y="112.78" width="20.55" height="22.55" fill="#5aaafa" stroke="#5291d6" stroke-width="1.25" rx="1.6" />
<rect x="661.22" y="112.78" width="20.55" height="22.55" fill="#d7d7d7" stroke="#848484" stroke-width="1.25" rx="1.6" />
<rect x="684.44" y="112.78" width="20.55" height="22.55" fill="#d7d7d7" stroke="#848484" stroke-width="1.25" rx="1.6" />
<rect x="707.67" y="112.78" width="20.55" height="22.55" fill="#d7d7d7" stroke="#848484" stroke-width="1.25" rx="1.6" />
<rect x="730.90" y="112.78" width="20.55" height="22.55" fill="#d7d7d7" stroke="#848484" stroke-width="1.25" rx="1.6" />
<rect x="10.78" y="137.93" width="20.55" height="22.55" fill="#d7d7d7" stroke="#848484" stroke-width="1.25" rx="1.6" />
<rect x="34.01" y="137.93" width="20.55" height="22.55" fill="#d7d7d7" stroke="#848484" stroke-width="1.25" rx="1.6" />
<rect x="57.23" y="137.93" width="20.55" height="22.55" fill="#d7d7d7" stroke="#848484" stroke-width="1.25" rx="1.6" />
<rect x="80.47" y="137.93" width="20.55" height="22.55" fill="#d7d7d7" stroke="#848484" stroke-width="1.25" rx="1.6" />
<rect x="103.70" y="137.93" width="20.55" height="22.55" fill="#5aaafa" stroke="#5291d6" stroke-width="1.25" rx="1.6" />
<rect x="126.93" y="137.93" width="20.55" height="22.55" fill="#5aaafa" stroke="#5291d6" stroke-width="1.25" rx="1.6" />
<rect x="150.16" y="137.93" width="20.55" height="22.55" fill="#d7d7d7" stroke="#848484" stroke-width="1.25" rx="1.6" />
<rect x="173.39" y="137.93" width="20.55" height="22.55" fill="#5aaafa" stroke="#5291d6" stroke-width="1.25" rx="1.6" />
<rect x="196.62" y="137.93" width="20.55" height="22.55" fill="#d7d7d7" stroke="#848484" stroke-width="1.25" rx="1.6" />
<rect x="219.84" y="137.93" width="20.55" height="22.55" fill="#d7d7d7" stroke="#848484" stroke-width="1.25" rx="1.6" />
<rect x="243.08" y="137.93" width="20.55" height="22.55" fill="#d7d7d7" stroke="#848484" stroke-width="1.25" rx="1.6" />
<rect x="266.30" y="137.93" width="20.55" height="22.55" fill="#d7d7d7" stroke="#848484" stroke-width="1.25" rx="1.6" />
<rect x="289.53" y="137.93" width="20.55" height="22.55" fill="#d7d7d7" stroke="#848484" stroke-width="1.25" rx="1.6" />
<rect x="312.76" y="137.93" width="20.55" height="22.55" fill="#d7d7d7" stroke="#848484" stroke-width="1.25" rx="1.6" />
<rect x="336.00" y="137.93" width="20.55" height="22.55" fill="#d7d7d7" stroke="#848484" stroke-width="1.25" rx="1.6" />
<rect x="359.22" y="137.93" width="20.55" height="22.55" fill="#d7d7d7" stroke="#848484" stroke-width="1.25" rx="1.6" />
<rect x="382.45" y="137.93" width="20.55" height="22.55" fill="#d7d7d7" stroke="#848484" stroke-width="1.25" rx="1.6" />
<rect x="405.69" y="137.93" width="20.55" height="22.55" fill="#5aaafa" stroke="#5291d6" stroke-width="1.25" rx="1.6" />
<rect x="428.91" y="137.93" width="20.55" height="22.55" fill="#5aaafa" stroke="#5291d6" stroke-width="1.25" rx="1.6" />
<rect x="452.14" y="137.93" width="20.55" height="22.55" fill="#d7d7d7" stroke="#848484" stroke-width="1.25" rx="1.6" />
<rect x="475.38" y="137.93" width="20.55" height="22.55" fill="#5aaafa" stroke="#5291d6" stroke-width="1.25" rx="1.6" />
<rect x="498.60" y="137.93" width="20.55" height="22.55" fill="#d7d7d7" stroke="#848484" stroke-width="1.25" rx="1.6" />
<rect x="521.83" y="137.93" width="20.55" height="22.55" fill="#d7d7d7" stroke="#848484" stroke-width="1.25" rx="1.6" />
<rect x="545.06" y="137.93" width="20.55" height="22.55" fill="#d7d7d7" stroke="#848484" stroke-width="1.25" rx="1.6" />
<rect x="568.29" y="137.93" width="20.55" height="22.55" fill="#d7d7d7" stroke="#848484" stroke-width="1.25" rx="1.6" />
<rect x="591.52" y="137.93" width="20.55" height="22.55" fill="#d7d7d7" stroke="#848484" stroke-width="1.25" rx="1.6" />
<rect x="614.75" y="137.93" width="20.55" height="22.55" fill="#d7d7d7" stroke="#848484" stroke-width="1.25" rx="1.6" />
<rect x="637.99" y="137.93" width="20.55" height="22.55" fill="#d7d7d7" stroke="#848484" stroke-width="1.25" rx="1.6" />
<rect x="661.22" y="137.93" width="20.55" height="22.55" fill="#d7d7d7" stroke="#848484" stroke-width="1.25" rx="1.6" />
<rect x="684.44" y="137.93" width="20.55" height="22.55" fill="#d7d7d7" stroke="#848484" stroke-width="1.25" rx="1.6" />
<rect x="707.67" y="137.93" width="20.55" height="22.55" fill="#d7d7d7" stroke="#848484" stroke-width="1.25" rx="1.6" />
<rect x="730.90" y="137.93" width="20.55" height="22.55" fill="#5aaafa" stroke="#5291d6" stroke-width="1.25" rx="1.6" />
<rect x="10.78" y="163.07" width="20.55" height="22.55" fill="#d7d7d7" stroke="#848484" stroke-width="1.25" rx="1.6" />
<rect x="34.01" y="163.07" width="20.55" height="22.55" fill="#d7d7d7" stroke="#848484" stroke-width="1.25" rx="1.6" />
<rect x="57.23" y="163.07" width="20.55" height="22.55" fill="#5aaafa" stroke="#5291d6" stroke-width="1.25" rx="1.6" />
<rect x="80.47" y="163.07" width="20.55" height="22.55" fill="#d7d7d7" stroke="#848484" stroke-width="1.25" rx="1.6" />
<rect x="103.70" y="163.07" width="20.55" height="22.55" fill="#d7d7d7" stroke="#848484" stroke-width="1.25" rx="1.6" />
<rect x="126.93" y="163.07" width="20.55" height="22.55" fill="#d7d7d7" stroke="#848484" stroke-width="1.25" rx="1.6" />
<rect x="150.16" y="163.07" width="20.55" height="22.55" fill="#d7d7d7" stroke="#848484" stroke-width="1.25" rx="1.6" />
<rect x="173.39" y="163.07" width="20.55" height="22.55" fill="#d7d7d7" stroke="#848484" stroke-width="1.25" rx="1.6" />
<rect x="196.62" y="163.07" width="20.55" height="22.55" fill="#5aaafa" stroke="#5291d6" stroke-width="1.25" rx="1.6" />
<rect x="219.84" y="163.07" width="20.55" height="22.55" fill="#d7d7d7" stroke="#848484" stroke-width="1.25" rx="1.6" />
<rect x="243.08" y="163.07" width="20.55" height="22.55" fill="#d7d7d7" stroke="#848484" stroke-width="1.25" rx="1.6" />
<rect x="266.30" y="163.07" width="20.55" height="22.55" fill="#d7d7d7" stroke="#848484" stroke-width="1.25" rx="1.6" />
<rect x="289.53" y="163.07" width="20.55" height="22.55" fill="#d7d7d7" stroke="#848484" stroke-width="1.25" rx="1.6" />
<rect x="312.76" y="163.07" width="20.55" height="22.55" fill="#d7d7d7" stroke="#848484" stroke-width="1.25" rx="1.6" />
<rect x="336.00" y="163.07" width="20.55" height="22.55" fill="#d7d7d7" stroke="#848484" stroke-width="1.25" rx="1.6" />
<rect x="359.22" y="163.07" width="20.55" height="22.55" fill="#d7d7d7" stroke="#848484" stroke-width="1.25" rx="1.6" />
<rect x="382.45" y="163.07" width="20.55" height="22.55" fill="#d7d7d7" stroke="#848484" stroke-width="1.25" rx="1.6" />
<rect x="405.69" y="163.07" width="20.55" height="22.55" fill="#d7d7d7" stroke="#848484" stroke-width="1.25" rx="1.6" />
<rect x="428.91" y="163.07" width="20.55" height="22.55" fill="#d7d7d7" stroke="#848484" stroke-width="1.25" rx="1.6" />
<rect x="452.14" y="163.07" width="20.55" height="22.55" fill="#d7d7d7" stroke="#848484" stroke-width="1.25" rx="1.6" />
<rect x="475.38" y="163.07" width="20.55" height="22.55" fill="#d7d7d7" stroke="#848484" stroke-width="1.25" rx="1.6" />
<rect x="498.60" y="163.07" width="20.55" height="22.55" fill="#d7d7d7" stroke="#848484" stroke-width="1.25" rx="1.6" />
<rect x="521.83" y="163.07" width="20.55" height="22.55" fill="#d7d7d7" stroke="#848484" stroke-width="1.25" rx="1.6" />
<rect x="545.06" y="163.07" width="20.55" height="22.55" fill="#d7d7d7" stroke="#848484" stroke-width="1.25" rx="1.6" />
<rect x="568.29" y="163.07" width="20.55" height="22.55" fill="#d7d7d7" stroke="#848484" stroke-width="1.25" rx="1.6" />
<rect x="591.52" y="163.07" width="20.55" height="22.55" fill="#5aaafa" stroke="#5291d6" stroke-width="1.25" rx="1.6" />
<rect x="614.75" y="163.07" width="20.55" height="22.55" fill="#d7d7d7" stroke="#848484" stroke-width="1.25" rx="1.6" />
<rect x="637.99" y="163.07" width="20.55" height="22.55" fill="#d7d7d7" stroke="#848484" stroke-width="1.25" rx="1.6" />
<rect x="661.22" y="163.07" width="20.55" height="22.55" fill="#d7d7d7" stroke="#848484" stroke-width="1.25" rx="1.6" />
<rect x="684.44" y="163.07" width="20.55" height="22.55" fill="#d7d7d7" stroke="#848484" stroke-width="1.25" rx="1.6" />
<rect x="707.67" y="163.07" width="20.55" height="22.55" fill="#d7d7d7" stroke="#848484" stroke-width="1.25" rx="1.6" />
<rect x="730.90" y="163.07" width="20.55" height="22.55" fill="#d7d7d7" stroke="#848484" stroke-width="1.25" rx="1.6" />
<rect x="10.78" y="188.22" width="20.55" height="22.55" fill="#d7d7d7" stroke="#848484" stroke-width="1.25" rx="1.6" />
<rect x="34.01" y="188.22" width="20.55" height="22.55" fill="#d7d7d7" stroke="#848484" stroke-width="1.25" rx="1.6" />
<rect x="57.23" y="188.22" width="20.55" height="22.55" fill="#d7d7d7" stroke="#848484" stroke-width="1.25" rx="1.6" />
<rect x="80.47" y="188.22" width="20.55" height="22.55" fill="#d7d7d7" stroke="#848484" stroke-width="1.25" rx="1.6" />
<rect x="103.70" y="188.22" width="20.55" height="22.55" fill="#d7d7d7" stroke="#848484" stroke-width="1.25" rx="1.6" />
<rect x="126.93" y="188.22" width="20.55" height="22.55" fill="#d7d7d7" stroke="#848484" stroke-width="1.25" rx="1.6" />
<rect x="150.16" y="188.22" width="20.55" height="22.55" fill="#d7d7d7" stroke="#848484" stroke-width="1.25" rx="1.6" />
<rect x="173.39" y="188.22" width="20.55" height="22.55" fill="#d7d7d7" stroke="#848484" stroke-width="1.25" rx="1.6" />
<rect x="196.62" y="188.22" width="20.55" height="22.55" fill="#d7d7d7" stroke="#848484" stroke-width="1.25" rx="1.6" />
<rect x="219.84" y="188.22" width="20.55" height="22.55" fill="#d7d7d7" stroke="#848484" stroke-width="1.25" rx="1.6" />
<rect x="243.08" y="188.22" width="20.55" height="22.55" fill="#d7d7d7" stroke="#848484" stroke-width="1.25" rx="1.6" />
<rect x="266.30" y="188.22" width="20.55" height="22.55" fill="#d7d7d7" stroke="#848484" stroke-width="1.25" rx="1.6" />
<rect x="289.53" y="188.22" width="20.55" height="22.55" fill="#d7d7d7" stroke="#848484" stroke-width="1.25" rx="1.6" />
<rect x="312.76" y="188.22" width="20.55" height="22.55" fill="#d7d7d7" stroke="#848484" stroke-width="1.25" rx="1.6" />
<rect x="336.00" y="188.22" width="20.55" height="22.55" fill="#d7d7d7" stroke="#848484" stroke-width="1.25" rx="1.6" />
<rect x="359.22" y="188.22" width="20.55" height="22.55" fill="#d7d7d7" stroke="#848484" stroke-width="1.25" rx="1.6" />
<rect x="382.45" y="188.22" width="20.55" height="22.55" fill="#d7d7d7" stroke="#848484" stroke-width="1.25" rx="1.6" />
<rect x="405.69" y="188.22" width="20.55" height="22.55" fill="#d7d7d7" stroke="#848484" stroke-width="1.25" rx="1.6" />
<rect x="428.91" y="188.22" width="20.55" height="22.55" fill="#d7d7d7" stroke="#848484" stroke-width="1.25" rx="1.6" />
<rect x="452.14" y="188.22" width="20.55" height="22.55" fill="#d7d7d7" stroke="#848484" stroke-width="1.25" rx="1.6" />
<rect x="475.38" y="188.22" width="20.55" height="22.55" fill="#d7d7d7" stroke="#848484" stroke-width="1.25" rx="1.6" />
<rect x="498.60" y="188.22" width="20.55" height="22.55" fill="#d7d7d7" stroke="#848484" stroke-width="1.25" rx="1.6" />
<rect x="521.83" y="188.22" width="20.55" height="22.55" fill="#d7d7d7" stroke="#848484" stroke-width="1.25" rx="1.6" />
<rect x="545.06" y="188.22" width="20.55" height="22.55" fill="#d7d7d7" stroke="#848484" stroke-width="1.25" rx="1.6" />
<rect x="568.29" y="188.22" width="20.55" height="22.55" fill="#d7d7d7" stroke="#848484" stroke-width="1.25" rx="1.6" />
<rect x="591.52" y="188.22" width="20.55" height="22.55" fill="#d7d7d7" stroke="#848484" stroke-width="1.25" rx="1.6" />
<rect x="614.75" y="188.22" width="20.55" height="22.55" fill="#5aaafa" stroke="#5291d6" stroke-width="1.25" rx="1.6" />
<rect x="637.99" y="188.22" width="20.55" height="22.55" fill="#d7d7d7" stroke="#848484" stroke-width="1.25" rx="1.6" />
<rect x="661.22" y="188.22" width="20.55" height="22.55" fill="#d7d7d7" stroke="#848484" stroke-width="1.25" rx="1.6" />
<rect x="684.44" y="188.22" width="20.55" height="22.55" fill="#d7d7d7" stroke="#848484" stroke-width="1.25" rx="1.6" />
<rect x="707.67" y="188.22" width="20.55" height="22.55" fill="#5aaafa" stroke="#5291d6" stroke-width="1.25" rx="1.6" />
<rect x="730.90" y="188.22" width="20.55" height="22.55" fill="#d7d7d7" stroke="#848484" stroke-width="1.25" rx="1.6" />
<rect x="10.78" y="213.38" width="20.55" height="22.55" fill="#d7d7d7" stroke="#848484" stroke-width="1.25" rx="1.6" />
<rect x="34.01" y="213.38" width="20.55" height="22.55" fill="#d7d7d7" stroke="#848484" stroke-width="1.25" rx="1.6" />
<rect x="57.23" y="213.38" width="20.55" height="22.55" fill="#d7d7d7" stroke="#848484" stroke-width="1.25" rx="1.6" />
<rect x="80.47" y="213.38" width="20.55" height="22.55" fill="#d7d7d7" stroke="#848484" stroke-width="1.25" rx="1.6" />
<rect x="103.70" y="213.38" width="20.55" height="22.55" fill="#d7d7d7" stroke="#848484" stroke-width="1.25" rx="1.6" />
<rect x="126.93" y="213.38" width="20.55" height="22.55" fill="#d7d7d7" stroke="#848484" stroke-width="1.25" rx="1.6" />
<rect x="150.16" y="213.38" width="20.55" height="22.55" fill="#5aaafa" stroke="#5291d6" stroke-width="1.25" rx="1.6" />
<rect x="173.39" y="213.38" width="20.55" height="22.55" fill="#d7d7d7" stroke="#848484" stroke-width="1.25" rx="1.6" />
<rect x="196.62" y="213.38" width="20.55" height="22.55" fill="#d7d7d7" stroke="#848484" stroke-width="1.25" rx="1.6" />
<rect x="219.84" y="213.38" width="20.55" height="22.55" fill="#d7d7d7" stroke="#848484" stroke-width="1.25" rx="1.6" />
<rect x="243.08" y="213.38" width="20.55" height="22.55" fill="#d7d7d7" stroke="#848484" stroke-width="1.25" rx="1.6" />
<rect x="266.30" y="213.38" width="20.55" height="22.55" fill="#d7d7d7" stroke="#848484" stroke-width="1.25" rx="1.6" />
<rect x="289.53" y="213.38" width="20.55" height="22.55" fill="#5aaafa" stroke="#5291d6" stroke-width="1.25" rx="1.6" />
<rect x="312.76" y="213.38" width="20.55" height="22.55" fill="#5aaafa" stroke="#5291d6" stroke-width="1.25" rx="1.6" />
<rect x="336.00" y="213.38" width="20.55" height="22.55" fill="#d7d7d7" stroke="#848484" stroke-width="1.25" rx="1.6" />
<rect x="359.22" y="213.38" width="20.55" height="22.55" fill="#d7d7d7" stroke="#848484" stroke-width="1.25" rx="1.6" />
<rect x="382.45" y="213.38" width="20.55" height="22.55" fill="#d7d7d7" stroke="#848484" stroke-width="1.25" rx="1.6" />
<rect x="405.69" y="213.38" width="20.55" height="22.55" fill="#d7d7d7" stroke="#848484" stroke-width="1.25" rx="1.6" />
<rect x="428.91" y="213.38" width="20.55" height="22.55" fill="#d7d7d7" stroke="#848484" stroke-width="1.25" rx="1.6" />
<rect x="452.14" y="213.38" width="20.55" height="22.55" fill="#d7d7d7" stroke="#848484" stroke-width="1.25" rx="1.6" />
<rect x="475.38" y="213.38" width="20.55" height="22.55" fill="#d7d7d7" stroke="#848484" stroke-width="1.25" rx="1.6" />
<rect x="498.60" y="213.38" width="20.55" height="22.55" fill="#5aaafa" stroke="#5291d6" stroke-width="1.25" rx="1.6" />
<rect x="521.83" y="213.38" width="20.55" height="22.55" fill="#d7d7d7" stroke="#848484" stroke-width="1.25" rx="1.6" />
<rect x="545.06" y="213.38" width="20.55" height="22.55" fill="#d7d7d7" stroke="#848484" stroke-width="1.25" rx="1.6" />
<rect x="568.29" y="213.38" width="20.55" height="22.55" fill="#d7d7d7" stroke="#848484" stroke-width="1.25" rx="1.6" />
<rect x="591.52" y="213.38" width="20.55" height="22.55" fill="#d7d7d7" stroke="#848484" stroke-width="1.25" rx="1.6" />
<rect x="614.75" y="213.38" width="20.55" height="22.55" fill="#d7d7d7" stroke="#848484" stroke-width="1.25" rx="1.6" />
<rect x="637.99" y="213.38" width="20.55" height="22.55" fill="#d7d7d7" stroke="#848484" stroke-width="1.25" rx="1.6" />
<rect x="661.22" y="213.38" width="20.55" height="22.55" fill="#d7d7d7" stroke="#848484" stroke-width="1.25" rx="1.6" />
<rect x="684.44" y="213.38" width="20.55" height="22.55" fill="#d7d7d7" stroke="#848484" stroke-width="1.25" rx="1.6" />
<rect x="707.67" y="213.38" width="20.55" height="22.55" fill="#d7d7d7" stroke="#848484" stroke-width="1.25" rx="1.6" />
<rect x="730.90" y="213.38" width="20.55" height="22.55" fill="#d7d7d7" stroke="#848484" stroke-width="1.25" rx="1.6" />
<rect x="10.78" y="238.52" width="20.55" height="22.55" fill="#5aaafa" stroke="#5291d6" stroke-width="1.25" rx="1.6" />
<rect x="34.01" y="238.52" width="20.55" height="22.55" fill="#d7d7d7" stroke="#848484" stroke-width="1.25" rx="1.6" />
<rect x="57.23" y="238.52" width="20.55" height="22.55" fill="#d7d7d7" stroke="#848484" stroke-width="1.25" rx="1.6" />
<rect x="80.47" y="238.52" width="20.55" height="22.55" fill="#d7d7d7" stroke="#848484" stroke-width="1.25" rx="1.6" />
<rect x="103.70" y="238.52" width="20.55" height="22.55" fill="#d7d7d7" stroke="#848484" stroke-width="1.25" rx="1.6" />
<rect x="126.93" y="238.52" width="20.55" height="22.55" fill="#d7d7d7" stroke="#848484" stroke-width="1.25" rx="1.6" />
<rect x="150.16" y="238.52" width="20.55" height="22.55" fill="#d7d7d7" stroke="#848484" stroke-width="1.25" rx="1.6" />
<rect x="173.39" y="238.52" width="20.55" height="22.55" fill="#d7d7d7" stroke="#848484" stroke-width="1.25" rx="1.6" />
<rect x="196.62" y="238.52" width="20.55" height="22.55" fill="#d7d7d7" stroke="#848484" stroke-width="1.25" rx="1.6" />
<rect x="219.84" y="238.52" width="20.55" height="22.55" fill="#d7d7d7" stroke="#848484" stroke-width="1.25" rx="1.6" />
<rect x="243.08" y="238.52" width="20.55" height="22.55" fill="#d7d7d7" stroke="#848484" stroke-width="1.25" rx="1.6" />
<rect x="266.30" y="238.52" width="20.55" height="22.55" fill="#5aaafa" stroke="#5291d6" stroke-width="1.25" rx="1.6" />
<rect x="289.53" y="238.52" width="20.55" height="22.55" fill="#d7d7d7" stroke="#848484" stroke-width="1.25" rx="1.6" />
<rect x="312.76" y="238.52" width="20.55" height="22.55" fill="#d7d7d7" stroke="#848484" stroke-width="1.25" rx="1.6" />
<rect x="336.00" y="238.52" width="20.55" height="22.55" fill="#5aaafa" stroke="#5291d6" stroke-width="1.25" rx="1.6" />
<rect x="359.22" y="238.52" width="20.55" height="22.55" fill="#d7d7d7" stroke="#848484" stroke-width="1.25" rx="1.6" />
<rect x="382.45" y="238.52" width="20.55" height="22.55" fill="#d7d7d7" stroke="#848484" stroke-width="1.25" rx="1.6" />
<rect x="405.69" y="238.52" width="20.55" height="22.55" fill="#d7d7d7" stroke="#848484" stroke-width="1.25" rx="1.6" />
<rect x="428.91" y="238.52" width="20.55" height="22.55" fill="#d7d7d7" stroke="#848484" stroke-width="1.25" rx="1.6" />
<rect x="452.14" y="238.52" width="20.55" height="22.55" fill="#d7d7d7" stroke="#848484" stroke-width="1.25" rx="1.6" />
<rect x="475.38" y="238.52" width="20.55" height="22.55" fill="#d7d7d7" stroke="#848484" stroke-width="1.25" rx="1.6" />
<rect x="498.60" y="238.52" width="20.55" height="22.55" fill="#d7d7d7" stroke="#848484" stroke-width="1.25" rx="1.6" />
<rect x="521.83" y="238.52" width="20.55" height="22.55" fill="#5aaafa" stroke="#5291d6" stroke-width="1.25" rx="1.6" />
<rect x="545.06" y="238.52" width="20.55" height="22.55" fill="#5aaafa" stroke="#5291d6" stroke-width="1.25" rx="1.6" />
<rect x="568.29" y="238.52" width="20.55" height="22.55" fill="#d7d7d7" stroke="#848484" stroke-width="1.25" rx="1.6" />
<rect x="591.52" y="238.52" width="20.55" height="22.55" fill="#d7d7d7" stroke="#848484" stroke-width="1.25" rx="1.6" />
<rect x="614.75" y="238.52" width="20.55" height="22.55" fill="#d7d7d7" stroke="#848484" stroke-width="1.25" rx="1.6" />
<rect x="637.99" y="238.52" width="20.55" height="22.55" fill="#d7d7d7" stroke="#848484" stroke-width="1.25" rx="1.6" />
<rect x="661.22" y="238.52" width="20.55" height="22.55" fill="#d7d7d7" stroke="#848484" stroke-width="1.25" rx="1.6" />
<rect x="684.44" y="238.52" width="20.55" height="22.55" fill="#5aaafa" stroke="#5291d6" stroke-width="1.25" rx="1.6" />
<rect x="707.67" y="238.52" width="20.55" height="22.55" fill="#d7d7d7" stroke="#848484" stroke-width="1.25" rx="1.6" />
<rect x="730.90" y="238.52" width="20.55" height="22.55" fill="#d7d7d7" stroke="#848484" stroke-width="1.25" rx="1.6" />
<rect x="10.78" y="263.67" width="20.55" height="22.55" fill="#d7d7d7" stroke="#848484" stroke-width="1.25" rx="1.6" />
<rect x="34.01" y="263.67" width="20.55" height="22.55" fill="#5aaafa" stroke="#5291d6" stroke-width="1.25" rx="1.6" />
<rect x="57.23" y="263.67" width="20.55" height="22.55" fill="#d7d7d7" stroke="#848484" stroke-width="1.25" rx="1.6" />
<rect x="80.47" y="263.67" width="20.55" height="22.55" fill="#5aaafa" stroke="#5291d6" stroke-width="1.25" rx="1.6" />
<rect x="103.70" y="263.67" width="20.55" height="22.55" fill="#d7d7d7" stroke="#848484" stroke-width="1.25" rx="1.6" />
<rect x="126.93" y="263.67" width="20.55" height="22.55" fill="#d7d7d7" stroke="#848484" stroke-width="1.25" rx="1.6" />
<rect x="150.16" y="263.67" width="20.55" height="22.55" fill="#d7d7d7" stroke="#848484" stroke-width="1.25" rx="1.6" />
<rect x="173.39" y="263.67" width="20.55" height="22.55" fill="#d7d7d7" stroke="#848484" stroke-width="1.25" rx="1.6" />
<rect x="196.62" y="263.67" width="20.55" height="22.55" fill="#d7d7d7" stroke="#848484" stroke-width="1.25" rx="1.6" />
<rect x="219.84" y="263.67" width="20.55" height="22.55" fill="#5aaafa" stroke="#5291d6" stroke-width="1.25" rx="1.6" />
<rect x="243.08" y="263.67" width="20.55" height="22.55" fill="#5aaafa" stroke="#5291d6" stroke-width="1.25" rx="1.6" />
<rect x="266.30" y="263.67" width="20.55" height="22.55" fill="#d7d7d7" stroke="#848484" stroke-width="1.25" rx="1.6" />
<rect x="289.53" y="263.67" width="20.55" height="22.55" fill="#d7d7d7" stroke="#848484" stroke-width="1.25" rx="1.6" />
<rect x="312.76" y="263.67" width="20.55" height="22.55" fill="#d7d7d7" stroke="#848484" stroke-width="1.25" rx="1.6" />
<rect x="336.00" y="263.67" width="20.55" height="22.55" fill="#d7d7d7" stroke="#848484" stroke-width="1.25" rx="1.6" />
<rect x="359.22" y="263.67" width="20.55" height="22.55" fill="#d7d7d7" stroke="#848484" stroke-width="1.25" rx="1.6" />
<rect x="382.45" y="263.67" width="20.55" height="22.55" fill="#5aaafa" stroke="#5291d6" stroke-width="1.25" rx="1.6" />
<rect x="405.69" y="263.67" width="20.55" height="22.55" fill="#d7d7d7" stroke="#848484" stroke-width="1.25" rx="1.6" />
<rect x="428.91" y="263.67" width="20.55" height="22.55" fill="#d7d7d7" stroke="#848484" stroke-width="1.25" rx="1.6" />
<rect x="452.14" y="263.67" width="20.55" height="22.55" fill="#d7d7d7" stroke="#848484" stroke-width="1.25" rx="1.6" />
<rect x="475.38" y="263.67" width="20.55" height="22.55" fill="#d7d7d7" stroke="#848484" stroke-width="1.25" rx="1.6" />
<rect x="498.60" y="263.67" width="20.55" height="22.55" fill="#d7d7d7" stroke="#848484" stroke-width="1.25" rx="1.6" />
<rect x="521.83" y="263.67" width="20.55" height="22.55" fill="#d7d7d7" stroke="#848484" stroke-width="1.25" rx="1.6" />
<rect x="545.06" y="263.67" width="20.55" height="22.55" fill="#d7d7d7" stroke="#848484" stroke-width="1.25" rx="1.6" />
<rect x="568.29" y="263.67" width="20.55" height="22.55" fill="#5aaafa" stroke="#5291d6" stroke-width="1.25" rx="1.6" />
<rect x="591.52" y="263.67" width="20.55" height="22.55" fill="#d7d7d7" stroke="#848484" stroke-width="1.25" rx="1.6" />
<rect x="614.75" y="263.67" width="20.55" height="22.55" fill="#d7d7d7" stroke="#848484" stroke-width="1.25" rx="1.6" />
<rect x="637.99" y="263.67" width="20.55" height="22.55" fill="#d7d7d7" stroke="#848484" stroke-width="1.25" rx="1.6" />
<rect x="661.22" y="263.67" width="20.55" height="22.55" fill="#d7d7d7" stroke="#848484" stroke-width="1.25" rx="1.6" />
<rect x="684.44" y="263.67" width="20.55" height="22.55" fill="#d7d7d7" stroke="#848484" stroke-width="1.25" rx="1.6" />
<rect x="707.67" y="263.67" width="20.55" height="22.55" fill="#d7d7d7" stroke="#848484" stroke-width="1.25" rx="1.6" />
<rect x="730.90" y="263.67" width="20.55" height="22.55" fill="#d7d7d7" stroke="#848484" stroke-width="1.25" rx="1.6" />
<rect x="10.65" y="289.60" width="20.80" height="9.50" fill="#dfdfdf" stroke="#a2a2a2" stroke-width="1" rx="0.3" />
<text x="21.05" y="297.20" font-size="9.8" font-weight="bold" fill="#4c4c4c" text-anchor="middle" >1</text>
<rect x="33.88" y="289.60" width="20.80" height="9.50" fill="#dfdfdf" stroke="#a2a2a2" stroke-width="1" rx="0.3" />
<text x="44.28" y="297.20" font-size="9.8" font-weight="bold" fill="#4c4c4c" text-anchor="middle" >2</text>
<rect x="57.11" y="289.60" width="20.80" height="9.50" fill="#dfdfdf" stroke="#a2a2a2" stroke-width="1" rx="0.3" />
<text x="67.51" y="297.20" font-size="9.8" font-weight="bold" fill="#4c4c4c" text-anchor="middle" >3</text>
<rect x="80.34" y="289.60" width="20.80" height="9.50" fill="#dfdfdf" stroke="#a2a2a2" stroke-width="1" rx="0.3" />
<text x="90.74" y="297.20" font-size="9.8" font-weight="bold" fill="#4c4c4c" text-anchor="middle" >4</text>
<rect x="103.57" y="289.60" width="20.80" height="9.50" fill="#dfdfdf" stroke="#a2a2a2" stroke-width="1" rx="0.3" />
<text x="113.97" y="297.20" font-size="9.8" font-weight="bold" fill="#4c4c4c" text-anchor="middle" >5</text>
<rect x="126.80" y="289.60" width="20.80" height="9.50" fill="#dfdfdf" stroke="#a2a2a2" stroke-width="1" rx="0.3" />
<text x="137.20" y="297.20" font-size="9.8" font-weight="bold" fill="#4c4c4c" text-anchor="middle" >6</text>
<rect x="150.03" y="289.60" width="20.80" height="9.50" fill="#dfdfdf" stroke="#a2a2a2" stroke-width="1" rx="0.3" />
<text x="160.43" y="297.20" font-size="9.8" font-weight="bold" fill="#4c4c4c" text-anchor="middle" >7</text>
<rect x="173.26" y="289.60" width="20.80" height="9.50" fill="#dfdfdf" stroke="#a2a2a2" stroke-width="1" rx="0.3" />
<text x="183.66" y="297.20" font-size="9.8" font-weight="bold" fill="#4c4c4c" text-anchor="middle" >8</text>
<rect x="196.49" y="289.60" width="20.80" height="9.50" fill="#dfdfdf" stroke="#a2a2a2" stroke-width="1" rx="0.3" />
<text x="206.89" y="297.20" font-size="9.8" font-weight="bold" fill="#4c4c4c" text-anchor="middle" >9</text>
<rect x="219.72" y="289.60" width="20.80" height="9.50" fill="#dfdfdf" stroke="#a2a2a2" stroke-width="1" rx="0.3" />
<text x="230.12" y="297.20" font-size="9.8" font-weight="bold" fill="#4c4c4c" text-anchor="middle" >10</text>
<rect x="242.95" y="289.60" width="20.80" height="9.50" fill="#dfdfdf" stroke="#a2a2a2" stroke-width="1" rx="0.3" />
<text x="253.35" y="297.20" font-size="9.8" font-weight="bold" fill="#4c4c4c" text-anchor="middle" >11</text>
<rect x="266.18" y="289.60" width="20.80" height="9.50" fill="#dfdfdf" stroke="#a2a2a2" stroke-width="1" rx="0.3" />
<text x="276.58" y="297.20" font-size="9.8" font-weight="bold" fill="#4c4c4c" text-anchor="middle" >12</text>
<rect x="289.41" y="289.60" width="20.80" height="9.50" fill="#dfdfdf" stroke="#a2a2a2" stroke-width="1" rx="0.3" />
<text x="299.81" y="297.20" font-size="9.8" font-weight="bold" fill="#4c4c4c" text-anchor="middle" >13</text>
<rect x="312.64" y="289.60" width="20.80" height="9.50" fill="#dfdfdf" stroke="#a2a2a2" stroke-width="1" rx="0.3" />
<text x="323.04" y="297.20" font-size="9.8" font-weight="bold" fill="#4c4c4c" text-anchor="middle" >14</text>
<rect x="335.87" y="289.60" width="20.80" height="9.50" fill="#dfdfdf" stroke="#a2a2a2" stroke-width="1" rx="0.3" />
<text x="346.27" y="297.20" font-size="9.8" font-weight="bold" fill="#4c4c4c" text-anchor="middle" >15</text>
<rect x="359.10" y="289.60" width="20.80" height="9.50" fill="#dfdfdf" stroke="#a2a2a2" stroke-width="1" rx="0.3" />
<text x="369.50" y="297.20" font-size="9.8" font-weight="bold" fill="#4c4c4c" text-anchor="middle" >16</text>
<rect x="382.33" y="289.60" width="20.80" height="9.50" fill="#dfdfdf" stroke="#a2a2a2" stroke-width="1" rx="0.3" />
<text x="392.73" y="297.20" font-size="9.8" font-weight="bold" fill="#4c4c4c" text-anchor="middle" >17</text>
<rect x="405.56" y="289.60" width="20.80" height="9.50" fill="#dfdfdf" stroke="#a2a2a2" stroke-width="1" rx="0.3" />
<text x="415.96" y="297.20" font-size="9.8" font-weight="bold" fill="#4c4c4c" text-anchor="middle" >18</text>
<rect x="428.79" y="289.60" width="20.80" height="9.50" fill="#dfdfdf" stroke="#a2a2a2" stroke-width="1" rx="0.3" />
<text x="439.19" y="297.20" font-size="9.8" font-weight="bold" fill="#4c4c4c" text-anchor="middle" >19</text>
<rect x="452.02" y="289.60" width="20.80" height="9.50" fill="#dfdfdf" stroke="#a2a2a2" stroke-width="1" rx="0.3" />
<text x="462.42" y="297.20" font-size="9.8" font-weight="bold" fill="#4c4c4c" text-anchor="middle" >20</text>
<rect x="475.25" y="289.60" width="20.80" height="9.50" fill="#dfdfdf" stroke="#a2a2a2" stroke-width="1" rx="0.3" />
<text x="485.65" y="297.20" font-size="9.8" font-weight="bold" fill="#4c4c4c" text-anchor="middle" >21</text>
<rect x="498.48" y="289.60" width="20.80" height="9.50" fill="#dfdfdf" stroke="#a2a2a2" stroke-width="1" rx="0.3" />
<text x="508.88" y="297.20" font-size="9.8" font-weight="bold" fill="#4c4c4c" text-anchor="middle" >22</text>
<rect x="521.71" y="289.60" width="20.80" height="9.50" fill="#dfdfdf" stroke="#a2a2a2" stroke-width="1" rx="0.3" />
<text x="532.11" y="297.20" font-size="9.8" font-weight="bold" fill="#4c4c4c" text-anchor="middle" >23</text>
<rect x="544.94" y="289.60" width="20.80" height="9.50" fill="#dfdfdf" stroke="#a2a2a2" stroke-width="1" rx="0.3" />
<text x="555.34" y="297.20" font-size="9.8" font-weight="bold" fill="#4c4c4c" text-anchor="middle" >24</text>
<rect x="568.17" y="289.60" width="20.80" height="9.50" fill="#dfdfdf" stroke="#a2a2a2" stroke-width="1" rx="0.3" />
<text x="578.57" y="297.20" font-size="9.8" font-weight="bold" fill="#4c4c4c" text-anchor="middle" >25</text>
<rect x="591.40" y="289.60" width="20.80" height="9.50" fill="#dfdfdf" stroke="#a2a2a2" stroke-width="1" rx="0.3" />
<text x="601.80" y="297.20" font-size="9.8" font-weight="bold" fill="#4c4c4c" text-anchor="middle" >26</text>
<rect x="614.63" y="289.60" width="20.80" height="9.50" fill="#dfdfdf" stroke="#a2a2a2" stroke-width="1" rx="0.3" />
<text x="625.03" y="297.20" font-size="9.8" font-weight="bold" fill="#4c4c4c" text-anchor="middle" >27</text>
<rect x="637.86" y="289.60" width="20.80" height="9.50" fill="#dfdfdf" stroke="#a2a2a2" stroke-width="1" rx="0.3" />
<text x="648.26" y="297.20" font-size="9.8" font-weight="bold" fill="#4c4c4c" text-anchor="middle" >28</text>
<rect x="661.09" y="289.60" width="20.80" height="9.50" fill="#dfdfdf" stroke="#a2a2a2" stroke-width="1" rx="0.3" />
<text x="671.49" y="297.20" font-size="9.8" font-weight="bold" fill="#4c4c4c" text-anchor="middle" >29</text>
<rect x="684.32" y="289.60" width="20.80" height="9.50" fill="#dfdfdf" stroke="#a2a2a2" stroke-width="1" rx="0.3" />
<text x="694.72" y="297.20" font-size="9.8" font-weight="bold" fill="#4c4c4c" text-anchor="middle" >30</text>
<rect x="707.55" y="289.60" width="20.80" height="9.50" fill="#dfdfdf" stroke="#a2a2a2" stroke-width="1" rx="0.3" />
<text x="717.95" y="297.20" font-size="9.8" font-weight="bold" fill="#4c4c4c" text-anchor="middle" >31</text>
<rect x="730.78" y="289.60" width="20.80" height="9.50" fill="#dfdfdf" stroke="#a2a2a2" stroke-width="1" rx="0.3" />
<text x="741.18" y="297.20" font-size="9.8" font-weight="bold" fill="#4c4c4c" text-anchor="middle" >32</text>
<rect x="10.78" y="302.43" width="20.55" height="10.25" fill="#d7d7d7" stroke="#848484" stroke-width="1.25" rx="1.6" />
<rect x="34.01" y="302.43" width="20.55" height="10.25" fill="#d7d7d7" stroke="#848484" stroke-width="1.25" rx="1.6" />
<rect x="57.23" y="302.43" width="20.55" height="10.25" fill="#d7d7d7" stroke="#848484" stroke-width="1.25" rx="1.6" />
<rect x="80.47" y="302.43" width="20.55" height="10.25" fill="#d7d7d7" stroke="#848484" stroke-width="1.25" rx="1.6" />
<rect x="103.70" y="302.43" width="20.55" height="10.25" fill="#5aaafa" stroke="#5291d6" stroke-width="1.25" rx="1.6" />
<rect x="126.93" y="302.43" width="20.55" height="10.25" fill="#d7d7d7" stroke="#848484" stroke-width="1.25" rx="1.6" />
<rect x="150.16" y="302.43" width="20.55" height="10.25" fill="#d7d7d7" stroke="#848484" stroke-width="1.25" rx="1.6" />
<rect x="173.39" y="302.43" width="20.55" height="10.25" fill="#d7d7d7" stroke="#848484" stroke-width="1.25" rx="1.6" />
<rect x="196.62" y="302.43" width="20.55" height="10.25" fill="#d7d7d7" stroke="#848484" stroke-width="1.25" rx="1.6" />
<rect x="219.84" y="302.43" width="20.55" height="10.25" fill="#d7d7d7" stroke="#848484" stroke-width="1.25" rx="1.6" />
<rect x="243.08" y="302.43" width="20.55" height="10.25" fill="#d7d7d7" stroke="#848484" stroke-width="1.25" rx="1.6" />
<rect x="266.30" y="302.43" width="20.55" height="10.25" fill="#d7d7d7" stroke="#848484" stroke-width="1.25" rx="1.6" />
<rect x="289.53" y="302.43" width="20.55" height="10.25" fill="#d7d7d7" stroke="#848484" stroke-width="1.25" rx="1.6" />
<rect x="312.76" y="302.43" width="20.55" height="10.25" fill="#d7d7d7" stroke="#848484" stroke-width="1.25" rx="1.6" />
<rect x="336.00" y="302.43" width="20.55" height="10.25" fill="#d7d7d7" stroke="#848484" stroke-width="1.25" rx="1.6" />
<rect x="359.22" y="302.43" width="20.55" height="10.25" fill="#5aaafa" stroke="#5291d6" stroke-width="1.25" rx="1.6" />
<rect x="382.45" y="302.43" width="20.55" height="10.25" fill="#d7d7d7" stroke="#848484" stroke-width="1.25" rx="1.6" />
<rect x="405.69" y="302.43" width="20.55" height="10.25" fill="#d7d7d7" stroke="#848484" stroke-width="1.25" rx="1.6" />
<rect x="428.91" y="302.43" width="20.55" height="10.25" fill="#d7d7d7" stroke="#848484" stroke-width="1.25" rx="1.6" />
<rect x="452.14" y="302.43" width="20.55" height="10.25" fill="#d7d7d7" stroke="#848484" stroke-width="1.25" rx="1.6" />
<rect x="475.38" y="302.43" width="20.55" height="10.25" fill="#d7d7d7" stroke="#848484" stroke-width="1.25" rx="1.6" />
<rect x="498.60" y="302.43" width="20.55" height="10.25" fill="#5aaafa" stroke="#5291d6" stroke-width="1.25" rx="1.6" />
<rect x="521.83" y="302.43" width="20.55" height="10.25" fill="#d7d7d7" stroke="#848484" stroke-width="1.25" rx="1.6" />
<rect x="545.06" y="302.43" width="20.55" height="10.25" fill="#5aaafa" stroke="#5291d6" stroke-width="1.25" rx="1.6" />
<rect x="568.29" y="302.43" width="20.55" height="10.25" fill="#d7d7d7" stroke="#848484" stroke-width="1.25" rx="1.6" />
<rect x="591.52" y="302.43" width="20.55" height="10.25" fill="#d7d7d7" stroke="#848484" stroke-width="1.25" rx="1.6" />
<rect x="614.75" y="302.43" width="20.55" height="10.25" fill="#5aaafa" stroke="#5291d6" stroke-width="1.25" rx="1.6" />
<rect x="637.99" y="302.43" width="20.55" height="10.25" fill="#d7d7d7" stroke="#848484" stroke-width="1.25" rx="1.6" />
<rect x="661.22" y="302.43" width="20.55" height="10.25" fill="#d7d7d7" stroke="#848484" stroke-width="1.25" rx="1.6" />
<rect x="684.44" y="302.43" width="20.55" height="10.25" fill="#5aaafa" stroke="#5291d6" stroke-width="1.25" rx="1.6" />
<rect x="707.67" y="302.43" width="20.55" height="10.25" fill="#d7d7d7" stroke="#848484" stroke-width="1.25" rx="1.6" />
<rect x="730.90" y="302.43" width="20.55" height="10.25" fill="#d7d7d7" stroke="#848484" stroke-width="1.25" rx="1.6" />
<rect x="756.70" y="302.30" width="46.00" height="10.50" fill="#dfdfdf" stroke="#9c9c9c" stroke-width="1" rx="0.3" />
<text x="779.70" y="310.90" font-size="9.3" font-weight="bold" fill="#484848" text-anchor="middle" textLength="15.2" lengthAdjust="spacingAndGlyphs">Rev</text>
<rect x="10.78" y="315.12" width="20.55" height="10.25" fill="#d7d7d7" stroke="#848484" stroke-width="1.25" rx="1.6" />
<rect x="34.01" y="315.12" width="20.55" height="10.25" fill="#d7d7d7" stroke="#848484" stroke-width="1.25" rx="1.6" />
<rect x="57.23" y="315.12" width="20.55" height="10.25" fill="#d7d7d7" stroke="#848484" stroke-width="1.25" rx="1.6" />
<rect x="80.47" y="315.12" width="20.55" height="10.25" fill="#d7d7d7" stroke="#848484" stroke-width="1.25" rx="1.6" />
<rect x="103.70" y="315.12" width="20.55" height="10.25" fill="#d7d7d7" stroke="#848484" stroke-width="1.25" rx="1.6" />
<rect x="126.93" y="315.12" width="20.55" height="10.25" fill="#d7d7d7" stroke="#848484" stroke-width="1.25" rx="1.6" />
<rect x="150.16" y="315.12" width="20.55" height="10.25" fill="#d7d7d7" stroke="#848484" stroke-width="1.25" rx="1.6" />
<rect x="173.39" y="315.12" width="20.55" height="10.25" fill="#d7d7d7" stroke="#848484" stroke-width="1.25" rx="1.6" />
<rect x="196.62" y="315.12" width="20.55" height="10.25" fill="#d7d7d7" stroke="#848484" stroke-width="1.25" rx="1.6" />
<rect x="219.84" y="315.12" width="20.55" height="10.25" fill="#d7d7d7" stroke="#848484" stroke-width="1.25" rx="1.6" />
<rect x="243.08" y="315.12" width="20.55" height="10.25" fill="#d7d7d7" stroke="#848484" stroke-width="1.25" rx="1.6" />
<rect x="266.30" y="315.12" width="20.55" height="10.25" fill="#d7d7d7" stroke="#848484" stroke-width="1.25" rx="1.6" />
<rect x="289.53" y="315.12" width="20.55" height="10.25" fill="#d7d7d7" stroke="#848484" stroke-width="1.25" rx="1.6" />
<rect x="312.76" y="315.12" width="20.55" height="10.25" fill="#d7d7d7" stroke="#848484" stroke-width="1.25" rx="1.6" />
<rect x="336.00" y="315.12" width="20.55" height="10.25" fill="#d7d7d7" stroke="#848484" stroke-width="1.25" rx="1.6" />
<rect x="359.22" y="315.12" width="20.55" height="10.25" fill="#d7d7d7" stroke="#848484" stroke-width="1.25" rx="1.6" />
<rect x="382.45" y="315.12" width="20.55" height="10.25" fill="#d7d7d7" stroke="#848484" stroke-width="1.25" rx="1.6" />
<rect x="405.69" y="315.12" width="20.55" height="10.25" fill="#d7d7d7" stroke="#848484" stroke-width="1.25" rx="1.6" />
<rect x="428.91" y="315.12" width="20.55" height="10.25" fill="#d7d7d7" stroke="#848484" stroke-width="1.25" rx="1.6" />
<rect x="452.14" y="315.12" width="20.55" height="10.25" fill="#d7d7d7" stroke="#848484" stroke-width="1.25" rx="1.6" />
<rect x="475.38" y="315.12" width="20.55" height="10.25" fill="#d7d7d7" stroke="#848484" stroke-width="1.25" rx="1.6" />
<rect x="498.60" y="315.12" width="20.55" height="10.25" fill="#d7d7d7" stroke="#848484" stroke-width="1.25" rx="1.6" />
<rect x="521.83" y="315.12" width="20.55" height="10.25" fill="#d7d7d7" stroke="#848484" stroke-width="1.25" rx="1.6" />
<rect x="545.06" y="315.12" width="20.55" height="10.25" fill="#d7d7d7" stroke="#848484" stroke-width="1.25" rx="1.6" />
<rect x="568.29" y="315.12" width="20.55" height="10.25" fill="#d7d7d7" stroke="#848484" stroke-width="1.25" rx="1.6" />
<rect x="591.52" y="315.12" width="20.55" height="10.25" fill="#d7d7d7" stroke="#848484" stroke-width="1.25" rx="1.6" />
<rect x="614.75" y="315.12" width="20.55" height="10.25" fill="#d7d7d7" stroke="#848484" stroke-width="1.25" rx="1.6" />
<rect x="637.99" y="315.12" width="20.55" height="10.25" fill="#d7d7d7" stroke="#848484" stroke-width="1.25" rx="1.6" />
<rect x="661.22" y="315.12" width="20.55" height="10.25" fill="#d7d7d7" stroke="#848484" stroke-width="1.25" rx="1.6" />
<rect x="684.44" y="315.12" width="20.55" height="10.25" fill="#d7d7d7" stroke="#848484" stroke-width="1.25" rx="1.6" />
<rect x="707.67" y="315.12" width="20.55" height="10.25" fill="#d7d7d7" stroke="#848484" stroke-width="1.25" rx="1.6" />
<rect x="730.90" y="315.12" width="20.55" height="10.25" fill="#d7d7d7" stroke="#848484" stroke-width="1.25" rx="1.6" />
<rect x="756.70" y="315.00" width="46.00" height="10.50" fill="#dfdfdf" stroke="#9c9c9c" stroke-width="1" rx="0.3" />
<text x="779.70" y="323.60" font-size="9.3" font-weight="bold" fill="#484848" text-anchor="middle" textLength="20" lengthAdjust="spacingAndGlyphs">Mute</text>
<rect x="10.78" y="331.12" width="20.55" height="10.25" fill="#d7d7d7" stroke="#848484" stroke-width="1.25" rx="1.6" />
<rect x="34.01" y="331.12" width="20.55" height="10.25" fill="#d7d7d7" stroke="#848484" stroke-width="1.25" rx="1.6" />
<rect x="57.23" y="331.12" width="20.55" height="10.25" fill="#5aaafa" stroke="#5291d6" stroke-width="1.25" rx="1.6" />
<rect x="80.47" y="331.12" width="20.55" height="10.25" fill="#d7d7d7" stroke="#848484" stroke-width="1.25" rx="1.6" />
<rect x="103.70" y="331.12" width="20.55" height="10.25" fill="#d7d7d7" stroke="#848484" stroke-width="1.25" rx="1.6" />
<rect x="126.93" y="331.12" width="20.55" height="10.25" fill="#d7d7d7" stroke="#848484" stroke-width="1.25" rx="1.6" />
<rect x="150.16" y="331.12" width="20.55" height="10.25" fill="#5aaafa" stroke="#5291d6" stroke-width="1.25" rx="1.6" />
<rect x="173.39" y="331.12" width="20.55" height="10.25" fill="#5aaafa" stroke="#5291d6" stroke-width="1.25" rx="1.6" />
<rect x="196.62" y="331.12" width="20.55" height="10.25" fill="#d7d7d7" stroke="#848484" stroke-width="1.25" rx="1.6" />
<rect x="219.84" y="331.12" width="20.55" height="10.25" fill="#d7d7d7" stroke="#848484" stroke-width="1.25" rx="1.6" />
<rect x="243.08" y="331.12" width="20.55" height="10.25" fill="#d7d7d7" stroke="#848484" stroke-width="1.25" rx="1.6" />
<rect x="266.30" y="331.12" width="20.55" height="10.25" fill="#5aaafa" stroke="#5291d6" stroke-width="1.25" rx="1.6" />
<rect x="289.53" y="331.12" width="20.55" height="10.25" fill="#d7d7d7" stroke="#848484" stroke-width="1.25" rx="1.6" />
<rect x="312.76" y="331.12" width="20.55" height="10.25" fill="#d7d7d7" stroke="#848484" stroke-width="1.25" rx="1.6" />
<rect x="336.00" y="331.12" width="20.55" height="10.25" fill="#d7d7d7" stroke="#848484" stroke-width="1.25" rx="1.6" />
<rect x="359.22" y="331.12" width="20.55" height="10.25" fill="#5aaafa" stroke="#5291d6" stroke-width="1.25" rx="1.6" />
<rect x="382.45" y="331.12" width="20.55" height="10.25" fill="#d7d7d7" stroke="#848484" stroke-width="1.25" rx="1.6" />
<rect x="405.69" y="331.12" width="20.55" height="10.25" fill="#5aaafa" stroke="#5291d6" stroke-width="1.25" rx="1.6" />
<rect x="428.91" y="331.12" width="20.55" height="10.25" fill="#5aaafa" stroke="#5291d6" stroke-width="1.25" rx="1.6" />
<rect x="452.14" y="331.12" width="20.55" height="10.25" fill="#d7d7d7" stroke="#848484" stroke-width="1.25" rx="1.6" />
<rect x="475.38" y="331.12" width="20.55" height="10.25" fill="#d7d7d7" stroke="#848484" stroke-width="1.25" rx="1.6" />
<rect x="498.60" y="331.12" width="20.55" height="10.25" fill="#d7d7d7" stroke="#848484" stroke-width="1.25" rx="1.6" />
<rect x="521.83" y="331.12" width="20.55" height="10.25" fill="#5aaafa" stroke="#5291d6" stroke-width="1.25" rx="1.6" />
<rect x="545.06" y="331.12" width="20.55" height="10.25" fill="#d7d7d7" stroke="#848484" stroke-width="1.25" rx="1.6" />
<rect x="568.29" y="331.12" width="20.55" height="10.25" fill="#d7d7d7" stroke="#848484" stroke-width="1.25" rx="1.6" />
<rect x="591.52" y="331.12" width="20.55" height="10.25" fill="#5aaafa" stroke="#5291d6" stroke-width="1.25" rx="1.6" />
<rect x="614.75" y="331.12" width="20.55" height="10.25" fill="#5aaafa" stroke="#5291d6" stroke-width="1.25" rx="1.6" />
<rect x="637.99" y="331.12" width="20.55" height="10.25" fill="#d7d7d7" stroke="#848484" stroke-width="1.25" rx="1.6" />
<rect x="661.22" y="331.12" width="20.55" height="10.25" fill="#d7d7d7" stroke="#848484" stroke-width="1.25" rx="1.6" />
<rect x="684.44" y="331.12" width="20.55" height="10.25" fill="#d7d7d7" stroke="#848484" stroke-width="1.25" rx="1.6" />
<rect x="707.67" y="331.12" width="20.55" height="10.25" fill="#d7d7d7" stroke="#848484" stroke-width="1.25" rx="1.6" />
<rect x="730.90" y="331.12" width="20.55" height="10.25" fill="#5aaafa" stroke="#5291d6" stroke-width="1.25" rx="1.6" />
<rect x="756.70" y="331.00" width="46.00" height="10.50" fill="#dfdfdf" stroke="#9c9c9c" stroke-width="1" rx="0.3" />
<text x="779.70" y="339.60" font-size="9.3" font-weight="bold" fill="#484848" text-anchor="middle" textLength="20.4" lengthAdjust="spacingAndGlyphs">Env3</text>
<rect x="10.78" y="344.62" width="20.55" height="10.25" fill="#d7d7d7" stroke="#848484" stroke-width="1.25" rx="1.6" />
<rect x="34.01" y="344.62" width="20.55" height="10.25" fill="#5aaafa" stroke="#5291d6" stroke-width="1.25" rx="1.6" />
<rect x="57.23" y="344.62" width="20.55" height="10.25" fill="#d7d7d7" stroke="#848484" stroke-width="1.25" rx="1.6" />
<rect x="80.47" y="344.62" width="20.55" height="10.25" fill="#d7d7d7" stroke="#848484" stroke-width="1.25" rx="1.6" />
<rect x="103.70" y="344.62" width="20.55" height="10.25" fill="#d7d7d7" stroke="#848484" stroke-width="1.25" rx="1.6" />
<rect x="126.93" y="344.62" width="20.55" height="10.25" fill="#d7d7d7" stroke="#848484" stroke-width="1.25" rx="1.6" />
<rect x="150.16" y="344.62" width="20.55" height="10.25" fill="#d7d7d7" stroke="#848484" stroke-width="1.25" rx="1.6" />
<rect x="173.39" y="344.62" width="20.55" height="10.25" fill="#d7d7d7" stroke="#848484" stroke-width="1.25" rx="1.6" />
<rect x="196.62" y="344.62" width="20.55" height="10.25" fill="#d7d7d7" stroke="#848484" stroke-width="1.25" rx="1.6" />
<rect x="219.84" y="344.62" width="20.55" height="10.25" fill="#5aaafa" stroke="#5291d6" stroke-width="1.25" rx="1.6" />
<rect x="243.08" y="344.62" width="20.55" height="10.25" fill="#5aaafa" stroke="#5291d6" stroke-width="1.25" rx="1.6" />
<rect x="266.30" y="344.62" width="20.55" height="10.25" fill="#d7d7d7" stroke="#848484" stroke-width="1.25" rx="1.6" />
<rect x="289.53" y="344.62" width="20.55" height="10.25" fill="#5aaafa" stroke="#5291d6" stroke-width="1.25" rx="1.6" />
<rect x="312.76" y="344.62" width="20.55" height="10.25" fill="#d7d7d7" stroke="#848484" stroke-width="1.25" rx="1.6" />
<rect x="336.00" y="344.62" width="20.55" height="10.25" fill="#5aaafa" stroke="#5291d6" stroke-width="1.25" rx="1.6" />
<rect x="359.22" y="344.62" width="20.55" height="10.25" fill="#d7d7d7" stroke="#848484" stroke-width="1.25" rx="1.6" />
<rect x="382.45" y="344.62" width="20.55" height="10.25" fill="#d7d7d7" stroke="#848484" stroke-width="1.25" rx="1.6" />
<rect x="405.69" y="344.62" width="20.55" height="10.25" fill="#d7d7d7" stroke="#848484" stroke-width="1.25" rx="1.6" />
<rect x="428.91" y="344.62" width="20.55" height="10.25" fill="#d7d7d7" stroke="#848484" stroke-width="1.25" rx="1.6" />
<rect x="452.14" y="344.62" width="20.55" height="10.25" fill="#d7d7d7" stroke="#848484" stroke-width="1.25" rx="1.6" />
<rect x="475.38" y="344.62" width="20.55" height="10.25" fill="#5aaafa" stroke="#5291d6" stroke-width="1.25" rx="1.6" />
<rect x="498.60" y="344.62" width="20.55" height="10.25" fill="#d7d7d7" stroke="#848484" stroke-width="1.25" rx="1.6" />
<rect x="521.83" y="344.62" width="20.55" height="10.25" fill="#d7d7d7" stroke="#848484" stroke-width="1.25" rx="1.6" />
<rect x="545.06" y="344.62" width="20.55" height="10.25" fill="#d7d7d7" stroke="#848484" stroke-width="1.25" rx="1.6" />
<rect x="568.29" y="344.62" width="20.55" height="10.25" fill="#5aaafa" stroke="#5291d6" stroke-width="1.25" rx="1.6" />
<rect x="591.52" y="344.62" width="20.55" height="10.25" fill="#d7d7d7" stroke="#848484" stroke-width="1.25" rx="1.6" />
<rect x="614.75" y="344.62" width="20.55" height="10.25" fill="#d7d7d7" stroke="#848484" stroke-width="1.25" rx="1.6" />
<rect x="637.99" y="344.62" width="20.55" height="10.25" fill="#5aaafa" stroke="#5291d6" stroke-width="1.25" rx="1.6" />
<rect x="661.22" y="344.62" width="20.55" height="10.25" fill="#d7d7d7" stroke="#848484" stroke-width="1.25" rx="1.6" />
<rect x="684.44" y="344.62" width="20.55" height="10.25" fill="#d7d7d7" stroke="#848484" stroke-width="1.25" rx="1.6" />
<rect x="707.67" y="344.62" width="20.55" height="10.25" fill="#5aaafa" stroke="#5291d6" stroke-width="1.25" rx="1.6" />
<rect x="730.90" y="344.62" width="20.55" height="10.25" fill="#d7d7d7" stroke="#848484" stroke-width="1.25" rx="1.6" />
<rect x="756.70" y="344.50" width="46.00" height="10.50" fill="#dfdfdf" stroke="#9c9c9c" stroke-width="1" rx="0.3" />
<text x="779.70" y="353.10" font-size="9.3" font-weight="bold" fill="#484848" text-anchor="middle" textLength="20.4" lengthAdjust="spacingAndGlyphs">Env2</text>
<rect x="10.78" y="357.93" width="20.55" height="10.25" fill="#5aaafa" stroke="#5291d6" stroke-width="1.25" rx="1.6" />
<rect x="34.01" y="357.93" width="20.55" height="10.25" fill="#d7d7d7" stroke="#848484" stroke-width="1.25" rx="1.6" />
<rect x="57.23" y="357.93" width="20.55" height="10.25" fill="#d7d7d7" stroke="#848484" stroke-width="1.25" rx="1.6" />
<rect x="80.47" y="357.93" width="20.55" height="10.25" fill="#5aaafa" stroke="#5291d6" stroke-width="1.25" rx="1.6" />
<rect x="103.70" y="357.93" width="20.55" height="10.25" fill="#5aaafa" stroke="#5291d6" stroke-width="1.25" rx="1.6" />
<rect x="126.93" y="357.93" width="20.55" height="10.25" fill="#5aaafa" stroke="#5291d6" stroke-width="1.25" rx="1.6" />
<rect x="150.16" y="357.93" width="20.55" height="10.25" fill="#d7d7d7" stroke="#848484" stroke-width="1.25" rx="1.6" />
<rect x="173.39" y="357.93" width="20.55" height="10.25" fill="#d7d7d7" stroke="#848484" stroke-width="1.25" rx="1.6" />
<rect x="196.62" y="357.93" width="20.55" height="10.25" fill="#5aaafa" stroke="#5291d6" stroke-width="1.25" rx="1.6" />
<rect x="219.84" y="357.93" width="20.55" height="10.25" fill="#d7d7d7" stroke="#848484" stroke-width="1.25" rx="1.6" />
<rect x="243.08" y="357.93" width="20.55" height="10.25" fill="#d7d7d7" stroke="#848484" stroke-width="1.25" rx="1.6" />
<rect x="266.30" y="357.93" width="20.55" height="10.25" fill="#d7d7d7" stroke="#848484" stroke-width="1.25" rx="1.6" />
<rect x="289.53" y="357.93" width="20.55" height="10.25" fill="#d7d7d7" stroke="#848484" stroke-width="1.25" rx="1.6" />
<rect x="312.76" y="357.93" width="20.55" height="10.25" fill="#5aaafa" stroke="#5291d6" stroke-width="1.25" rx="1.6" />
<rect x="336.00" y="357.93" width="20.55" height="10.25" fill="#d7d7d7" stroke="#848484" stroke-width="1.25" rx="1.6" />
<rect x="359.22" y="357.93" width="20.55" height="10.25" fill="#d7d7d7" stroke="#848484" stroke-width="1.25" rx="1.6" />
<rect x="382.45" y="357.93" width="20.55" height="10.25" fill="#5aaafa" stroke="#5291d6" stroke-width="1.25" rx="1.6" />
<rect x="405.69" y="357.93" width="20.55" height="10.25" fill="#d7d7d7" stroke="#848484" stroke-width="1.25" rx="1.6" />
<rect x="428.91" y="357.93" width="20.55" height="10.25" fill="#d7d7d7" stroke="#848484" stroke-width="1.25" rx="1.6" />
<rect x="452.14" y="357.93" width="20.55" height="10.25" fill="#5aaafa" stroke="#5291d6" stroke-width="1.25" rx="1.6" />
<rect x="475.38" y="357.93" width="20.55" height="10.25" fill="#d7d7d7" stroke="#848484" stroke-width="1.25" rx="1.6" />
<rect x="498.60" y="357.93" width="20.55" height="10.25" fill="#5aaafa" stroke="#5291d6" stroke-width="1.25" rx="1.6" />
<rect x="521.83" y="357.93" width="20.55" height="10.25" fill="#d7d7d7" stroke="#848484" stroke-width="1.25" rx="1.6" />
<rect x="545.06" y="357.93" width="20.55" height="10.25" fill="#5aaafa" stroke="#5291d6" stroke-width="1.25" rx="1.6" />
<rect x="568.29" y="357.93" width="20.55" height="10.25" fill="#d7d7d7" stroke="#848484" stroke-width="1.25" rx="1.6" />
<rect x="591.52" y="357.93" width="20.55" height="10.25" fill="#d7d7d7" stroke="#848484" stroke-width="1.25" rx="1.6" />
<rect x="614.75" y="357.93" width="20.55" height="10.25" fill="#d7d7d7" stroke="#848484" stroke-width="1.25" rx="1.6" />
<rect x="637.99" y="357.93" width="20.55" height="10.25" fill="#d7d7d7" stroke="#848484" stroke-width="1.25" rx="1.6" />
<rect x="661.22" y="357.93" width="20.55" height="10.25" fill="#5aaafa" stroke="#5291d6" stroke-width="1.25" rx="1.6" />
<rect x="684.44" y="357.93" width="20.55" height="10.25" fill="#5aaafa" stroke="#5291d6" stroke-width="1.25" rx="1.6" />
<rect x="707.67" y="357.93" width="20.55" height="10.25" fill="#d7d7d7" stroke="#848484" stroke-width="1.25" rx="1.6" />
<rect x="730.90" y="357.93" width="20.55" height="10.25" fill="#d7d7d7" stroke="#848484" stroke-width="1.25" rx="1.6" />
<rect x="756.70" y="357.80" width="46.00" height="10.50" fill="#dfdfdf" stroke="#9c9c9c" stroke-width="1" rx="0.3" />
<text x="779.70" y="366.40" font-size="9.3" font-weight="bold" fill="#484848" text-anchor="middle" textLength="20.4" lengthAdjust="spacingAndGlyphs">Env1</text>
<rect x="10.65" y="371.40" width="20.80" height="9.70" fill="#dfdfdf" stroke="#a2a2a2" stroke-width="1" rx="0.3" />
<text x="21.05" y="379.20" font-size="9.8" font-weight="bold" fill="#4c4c4c" text-anchor="middle" >1</text>
<rect x="33.88" y="371.40" width="20.80" height="9.70" fill="#dfdfdf" stroke="#a2a2a2" stroke-width="1" rx="0.3" />
<text x="44.28" y="379.20" font-size="9.8" font-weight="bold" fill="#4c4c4c" text-anchor="middle" >2</text>
<rect x="57.11" y="371.40" width="20.80" height="9.70" fill="#dfdfdf" stroke="#a2a2a2" stroke-width="1" rx="0.3" />
<text x="67.51" y="379.20" font-size="9.8" font-weight="bold" fill="#4c4c4c" text-anchor="middle" >3</text>
<rect x="80.34" y="371.40" width="20.80" height="9.70" fill="#dfdfdf" stroke="#a2a2a2" stroke-width="1" rx="0.3" />
<text x="90.74" y="379.20" font-size="9.8" font-weight="bold" fill="#4c4c4c" text-anchor="middle" >4</text>
<rect x="103.57" y="371.40" width="20.80" height="9.70" fill="#dfdfdf" stroke="#a2a2a2" stroke-width="1" rx="0.3" />
<text x="113.97" y="379.20" font-size="9.8" font-weight="bold" fill="#4c4c4c" text-anchor="middle" >5</text>
<rect x="126.80" y="371.40" width="20.80" height="9.70" fill="#dfdfdf" stroke="#a2a2a2" stroke-width="1" rx="0.3" />
<text x="137.20" y="379.20" font-size="9.8" font-weight="bold" fill="#4c4c4c" text-anchor="middle" >6</text>
<rect x="150.03" y="371.40" width="20.80" height="9.70" fill="#dfdfdf" stroke="#a2a2a2" stroke-width="1" rx="0.3" />
<text x="160.43" y="379.20" font-size="9.8" font-weight="bold" fill="#4c4c4c" text-anchor="middle" >7</text>
<rect x="173.26" y="371.40" width="20.80" height="9.70" fill="#dfdfdf" stroke="#a2a2a2" stroke-width="1" rx="0.3" />
<text x="183.66" y="379.20" font-size="9.8" font-weight="bold" fill="#4c4c4c" text-anchor="middle" >8</text>
<rect x="196.49" y="371.40" width="20.80" height="9.70" fill="#dfdfdf" stroke="#a2a2a2" stroke-width="1" rx="0.3" />
<text x="206.89" y="379.20" font-size="9.8" font-weight="bold" fill="#4c4c4c" text-anchor="middle" >9</text>
<rect x="219.72" y="371.40" width="20.80" height="9.70" fill="#dfdfdf" stroke="#a2a2a2" stroke-width="1" rx="0.3" />
<text x="230.12" y="379.20" font-size="9.8" font-weight="bold" fill="#4c4c4c" text-anchor="middle" >10</text>
<rect x="242.95" y="371.40" width="20.80" height="9.70" fill="#dfdfdf" stroke="#a2a2a2" stroke-width="1" rx="0.3" />
<text x="253.35" y="379.20" font-size="9.8" font-weight="bold" fill="#4c4c4c" text-anchor="middle" >11</text>
<rect x="266.18" y="371.40" width="20.80" height="9.70" fill="#dfdfdf" stroke="#a2a2a2" stroke-width="1" rx="0.3" />
<text x="276.58" y="379.20" font-size="9.8" font-weight="bold" fill="#4c4c4c" text-anchor="middle" >12</text>
<rect x="289.41" y="371.40" width="20.80" height="9.70" fill="#dfdfdf" stroke="#a2a2a2" stroke-width="1" rx="0.3" />
<text x="299.81" y="379.20" font-size="9.8" font-weight="bold" fill="#4c4c4c" text-anchor="middle" >13</text>
<rect x="312.64" y="371.40" width="20.80" height="9.70" fill="#dfdfdf" stroke="#a2a2a2" stroke-width="1" rx="0.3" />
<text x="323.04" y="379.20" font-size="9.8" font-weight="bold" fill="#4c4c4c" text-anchor="middle" >14</text>
<rect x="335.87" y="371.40" width="20.80" height="9.70" fill="#dfdfdf" stroke="#a2a2a2" stroke-width="1" rx="0.3" />
<text x="346.27" y="379.20" font-size="9.8" font-weight="bold" fill="#4c4c4c" text-anchor="middle" >15</text>
<rect x="359.10" y="371.40" width="20.80" height="9.70" fill="#dfdfdf" stroke="#a2a2a2" stroke-width="1" rx="0.3" />
<text x="369.50" y="379.20" font-size="9.8" font-weight="bold" fill="#4c4c4c" text-anchor="middle" >16</text>
<rect x="382.33" y="371.40" width="20.80" height="9.70" fill="#dfdfdf" stroke="#a2a2a2" stroke-width="1" rx="0.3" />
<text x="392.73" y="379.20" font-size="9.8" font-weight="bold" fill="#4c4c4c" text-anchor="middle" >17</text>
<rect x="405.56" y="371.40" width="20.80" height="9.70" fill="#dfdfdf" stroke="#a2a2a2" stroke-width="1" rx="0.3" />
<text x="415.96" y="379.20" font-size="9.8" font-weight="bold" fill="#4c4c4c" text-anchor="middle" >18</text>
<rect x="428.79" y="371.40" width="20.80" height="9.70" fill="#dfdfdf" stroke="#a2a2a2" stroke-width="1" rx="0.3" />
<text x="439.19" y="379.20" font-size="9.8" font-weight="bold" fill="#4c4c4c" text-anchor="middle" >19</text>
<rect x="452.02" y="371.40" width="20.80" height="9.70" fill="#dfdfdf" stroke="#a2a2a2" stroke-width="1" rx="0.3" />
<text x="462.42" y="379.20" font-size="9.8" font-weight="bold" fill="#4c4c4c" text-anchor="middle" >20</text>
<rect x="475.25" y="371.40" width="20.80" height="9.70" fill="#dfdfdf" stroke="#a2a2a2" stroke-width="1" rx="0.3" />
<text x="485.65" y="379.20" font-size="9.8" font-weight="bold" fill="#4c4c4c" text-anchor="middle" >21</text>
<rect x="498.48" y="371.40" width="20.80" height="9.70" fill="#dfdfdf" stroke="#a2a2a2" stroke-width="1" rx="0.3" />
<text x="508.88" y="379.20" font-size="9.8" font-weight="bold" fill="#4c4c4c" text-anchor="middle" >22</text>
<rect x="521.71" y="371.40" width="20.80" height="9.70" fill="#dfdfdf" stroke="#a2a2a2" stroke-width="1" rx="0.3" />
<text x="532.11" y="379.20" font-size="9.8" font-weight="bold" fill="#4c4c4c" text-anchor="middle" >23</text>
<rect x="544.94" y="371.40" width="20.80" height="9.70" fill="#dfdfdf" stroke="#a2a2a2" stroke-width="1" rx="0.3" />
<text x="555.34" y="379.20" font-size="9.8" font-weight="bold" fill="#4c4c4c" text-anchor="middle" >24</text>
<rect x="568.17" y="371.40" width="20.80" height="9.70" fill="#dfdfdf" stroke="#a2a2a2" stroke-width="1" rx="0.3" />
<text x="578.57" y="379.20" font-size="9.8" font-weight="bold" fill="#4c4c4c" text-anchor="middle" >25</text>
<rect x="591.40" y="371.40" width="20.80" height="9.70" fill="#dfdfdf" stroke="#a2a2a2" stroke-width="1" rx="0.3" />
<text x="601.80" y="379.20" font-size="9.8" font-weight="bold" fill="#4c4c4c" text-anchor="middle" >26</text>
<rect x="614.63" y="371.40" width="20.80" height="9.70" fill="#dfdfdf" stroke="#a2a2a2" stroke-width="1" rx="0.3" />
<text x="625.03" y="379.20" font-size="9.8" font-weight="bold" fill="#4c4c4c" text-anchor="middle" >27</text>
<rect x="637.86" y="371.40" width="20.80" height="9.70" fill="#dfdfdf" stroke="#a2a2a2" stroke-width="1" rx="0.3" />
<text x="648.26" y="379.20" font-size="9.8" font-weight="bold" fill="#4c4c4c" text-anchor="middle" >28</text>
<rect x="661.09" y="371.40" width="20.80" height="9.70" fill="#dfdfdf" stroke="#a2a2a2" stroke-width="1" rx="0.3" />
<text x="671.49" y="379.20" font-size="9.8" font-weight="bold" fill="#4c4c4c" text-anchor="middle" >29</text>
<rect x="684.32" y="371.40" width="20.80" height="9.70" fill="#dfdfdf" stroke="#a2a2a2" stroke-width="1" rx="0.3" />
<text x="694.72" y="379.20" font-size="9.8" font-weight="bold" fill="#4c4c4c" text-anchor="middle" >30</text>
<rect x="707.55" y="371.40" width="20.80" height="9.70" fill="#dfdfdf" stroke="#a2a2a2" stroke-width="1" rx="0.3" />
<text x="717.95" y="379.20" font-size="9.8" font-weight="bold" fill="#4c4c4c" text-anchor="middle" >31</text>
<rect x="730.78" y="371.40" width="20.80" height="9.70" fill="#dfdfdf" stroke="#a2a2a2" stroke-width="1" rx="0.3" />
<text x="741.18" y="379.20" font-size="9.8" font-weight="bold" fill="#4c4c4c" text-anchor="middle" >32</text>
<rect x="758.20" y="291.00" width="41.80" height="6.60" fill="#a2c9f2" />
<rect x="758.20" y="372.40" width="41.80" height="6.60" fill="#a2c9f2" />
<rect x="757.20" y="89.70" width="45.00" height="36.00" fill="#5aaafa" stroke="#7fa4cc" stroke-width="1" rx="0.3" />
<text x="779.70" y="110.90" font-size="9.7" font-weight="bold" fill="#2f5684" text-anchor="middle" >Start</text>
<rect x="757.20" y="130.05" width="45.00" height="36.00" fill="#dcdcdc" stroke="#9c9c9c" stroke-width="1" rx="0.3" />
<text x="779.70" y="151.25" font-size="9.7" font-weight="bold" fill="#484848" text-anchor="middle" >Playbk</text>
<rect x="757.20" y="170.40" width="45.00" height="36.00" fill="#dcdcdc" stroke="#9c9c9c" stroke-width="1" rx="0.3" />
<text x="779.70" y="191.60" font-size="9.7" font-weight="bold" fill="#484848" text-anchor="middle" >Pitch</text>
<rect x="757.20" y="210.75" width="45.00" height="36.00" fill="#dcdcdc" stroke="#9c9c9c" stroke-width="1" rx="0.3" />
<text x="779.70" y="231.95" font-size="9.7" font-weight="bold" fill="#484848" text-anchor="middle" >Pan</text>
<rect x="757.20" y="251.10" width="45.00" height="36.00" fill="#dcdcdc" stroke="#9c9c9c" stroke-width="1" rx="0.3" />
<text x="779.70" y="272.30" font-size="9.7" font-weight="bold" fill="#484848" text-anchor="middle" >Vol</text>
<rect x="219.57" y="12.00" width="22.40" height="52.00" fill="rgba(246,92,92,0.30)" />
<rect x="148.98" y="86.60" width="23.20" height="200.80" fill="rgba(246,92,92,0.30)" />
<rect x="148.98" y="301.40" width="23.20" height="67.60" fill="rgba(246,92,92,0.30)" />
<rect x="13.70" y="389.90" width="79.20" height="38.40" fill="#dfdfdf" stroke="#aaaaaa" stroke-width="1" rx="1.5" />
<text x="88.40" y="400.90" font-size="9.4" font-weight="bold" fill="#868686" text-anchor="end" textLength="21.4" lengthAdjust="spacingAndGlyphs">Env1</text>
<path d="M17.5,424.1 L22.4,392.6 Q50,412 88.7,423.9" fill="none" stroke="#5a9fea" stroke-width="2.1" stroke-linejoin="round" stroke-linecap="round"/>
<circle cx="17.50" cy="424.10" r="1.7" fill="#cfe2f7" stroke="#5a9fea" stroke-width="1"/>
<circle cx="88.70" cy="423.90" r="1.7" fill="#cfe2f7" stroke="#5a9fea" stroke-width="1"/>
<rect x="232.70" y="389.90" width="79.20" height="38.40" fill="#dfdfdf" stroke="#aaaaaa" stroke-width="1" rx="1.5" />
<text x="307.40" y="400.90" font-size="9.4" font-weight="bold" fill="#868686" text-anchor="end" textLength="21.4" lengthAdjust="spacingAndGlyphs">Env1</text>
<path d="M236.5,424.1 L239.2,393 C275,392 300,398 307.1,423.7" fill="none" stroke="#5a9fea" stroke-width="2.1" stroke-linejoin="round" stroke-linecap="round"/>
<circle cx="236.50" cy="424.10" r="1.7" fill="#cfe2f7" stroke="#5a9fea" stroke-width="1"/>
<circle cx="307.10" cy="423.70" r="1.7" fill="#cfe2f7" stroke="#5a9fea" stroke-width="1"/>
<rect x="443.70" y="389.90" width="79.20" height="38.40" fill="#dfdfdf" stroke="#aaaaaa" stroke-width="1" rx="1.5" />
<text x="518.40" y="400.90" font-size="9.4" font-weight="bold" fill="#868686" text-anchor="end" textLength="21.4" lengthAdjust="spacingAndGlyphs">Env1</text>
<path d="M447.5,424.1 Q466,417 476.3,392.8 Q503,403 518.3,424.1" fill="none" stroke="#5a9fea" stroke-width="2.1" stroke-linejoin="round" stroke-linecap="round"/>
<circle cx="447.50" cy="424.10" r="1.7" fill="#cfe2f7" stroke="#5a9fea" stroke-width="1"/>
<circle cx="518.30" cy="424.10" r="1.7" fill="#cfe2f7" stroke="#5a9fea" stroke-width="1"/>
<text x="112.00" y="402.00" font-size="9" font-weight="bold" fill="#333333" text-anchor="middle" textLength="26" lengthAdjust="spacingAndGlyphs">Attack</text>
<text x="147.20" y="398.20" font-size="9" font-weight="bold" fill="#333333" text-anchor="middle" textLength="19.5" lengthAdjust="spacingAndGlyphs">Cur1</text>
<text x="182.20" y="398.20" font-size="9" font-weight="bold" fill="#333333" text-anchor="middle" textLength="19.5" lengthAdjust="spacingAndGlyphs">Cur2</text>
<path d="M106.53,423.72 A9.3,9.3 0 1 1 117.47,423.72" fill="none" stroke="#333333" stroke-width="1.85" stroke-linecap="round"/>
<line x1="111.40" y1="416.91" x2="106.02" y2="423.32" stroke="#333333" stroke-width="1.85" stroke-linecap="round"/>
<path d="M141.73,423.92 A9.3,9.3 0 1 1 152.67,423.92" fill="none" stroke="#333333" stroke-width="1.85" stroke-linecap="round"/>
<line x1="147.20" y1="416.40" x2="147.20" y2="405.70" stroke="#333333" stroke-width="1.85" stroke-linecap="round"/>
<path d="M142.80,401.60 L151.60,401.60 L147.20,405.80 Z" fill="#333333"/>
<path d="M176.73,423.92 A9.3,9.3 0 1 1 187.67,423.92" fill="none" stroke="#333333" stroke-width="1.85" stroke-linecap="round"/>
<line x1="182.20" y1="416.40" x2="182.20" y2="405.70" stroke="#333333" stroke-width="1.85" stroke-linecap="round"/>
<path d="M177.80,401.60 L186.60,401.60 L182.20,405.80 Z" fill="#333333"/>
<text x="330.90" y="402.00" font-size="9" font-weight="bold" fill="#333333" text-anchor="middle" textLength="26" lengthAdjust="spacingAndGlyphs">Attack</text>
<text x="366.40" y="398.20" font-size="9" font-weight="bold" fill="#333333" text-anchor="middle" textLength="19.5" lengthAdjust="spacingAndGlyphs">Cur1</text>
<text x="401.60" y="398.20" font-size="9" font-weight="bold" fill="#333333" text-anchor="middle" textLength="19.5" lengthAdjust="spacingAndGlyphs">Cur2</text>
<path d="M325.43,423.72 A9.3,9.3 0 1 1 336.37,423.72" fill="none" stroke="#333333" stroke-width="1.85" stroke-linecap="round"/>
<line x1="330.46" y1="417.02" x2="326.53" y2="424.41" stroke="#333333" stroke-width="1.85" stroke-linecap="round"/>
<path d="M360.93,423.92 A9.3,9.3 0 1 1 371.87,423.92" fill="none" stroke="#333333" stroke-width="1.85" stroke-linecap="round"/>
<line x1="366.40" y1="416.40" x2="366.40" y2="405.70" stroke="#333333" stroke-width="1.85" stroke-linecap="round"/>
<path d="M362.00,401.60 L370.80,401.60 L366.40,405.80 Z" fill="#333333"/>
<path d="M396.13,423.92 A9.3,9.3 0 1 1 407.07,423.92" fill="none" stroke="#333333" stroke-width="1.85" stroke-linecap="round"/>
<line x1="401.60" y1="416.40" x2="407.07" y2="423.92" stroke="#333333" stroke-width="1.85" stroke-linecap="round"/>
<path d="M397.20,401.60 L406.00,401.60 L401.60,405.80 Z" fill="#333333"/>
<text x="542.00" y="402.00" font-size="9" font-weight="bold" fill="#333333" text-anchor="middle" textLength="26" lengthAdjust="spacingAndGlyphs">Attack</text>
<text x="577.60" y="398.20" font-size="9" font-weight="bold" fill="#333333" text-anchor="middle" textLength="19.5" lengthAdjust="spacingAndGlyphs">Cur1</text>
<text x="612.70" y="398.20" font-size="9" font-weight="bold" fill="#333333" text-anchor="middle" textLength="19.5" lengthAdjust="spacingAndGlyphs">Cur2</text>
<path d="M536.53,423.72 A9.3,9.3 0 1 1 547.47,423.72" fill="none" stroke="#333333" stroke-width="1.85" stroke-linecap="round"/>
<line x1="541.65" y1="415.34" x2="538.52" y2="407.58" stroke="#333333" stroke-width="1.85" stroke-linecap="round"/>
<path d="M572.13,423.92 A9.3,9.3 0 1 1 583.07,423.92" fill="none" stroke="#333333" stroke-width="1.85" stroke-linecap="round"/>
<line x1="577.60" y1="416.40" x2="568.58" y2="414.15" stroke="#333333" stroke-width="1.85" stroke-linecap="round"/>
<path d="M573.20,401.60 L582.00,401.60 L577.60,405.80 Z" fill="#333333"/>
<path d="M607.23,423.92 A9.3,9.3 0 1 1 618.17,423.92" fill="none" stroke="#333333" stroke-width="1.85" stroke-linecap="round"/>
<line x1="612.70" y1="416.40" x2="621.59" y2="413.68" stroke="#333333" stroke-width="1.85" stroke-linecap="round"/>
<path d="M608.30,401.60 L617.10,401.60 L612.70,405.80 Z" fill="#333333"/>
<line x1="211" y1="389" x2="211" y2="430" stroke="#b8b8b8" stroke-width="1.3"/>
<line x1="427.2" y1="389" x2="427.2" y2="430" stroke="#b8b8b8" stroke-width="1.3"/>
<line x1="635.6" y1="389" x2="635.6" y2="430" stroke="#b8b8b8" stroke-width="1.3"/>
<rect x="645.60" y="388.40" width="155.40" height="41.00" fill="#183e66" />
<polyline points="645.8,391.5 651.0,392.0 655.0,395.0 659.0,404.0 663.0,418.0 667.0,425.5 677.5,391.3 692.5,426.0 696.3,391.5 718.5,426.0 721.0,391.2 727.0,391.5 733.0,394.0 738.0,403.0 741.0,416.0 744.5,426.0 755.6,391.5 770.0,426.0 773.8,391.5 797.5,426.5 800.0,391.5" fill="none" stroke="#6fb0ee" stroke-width="1.1" stroke-linejoin="round"/>
<g transform="translate(0.0,0)">
<rect x="817.60" y="14.20" width="35.60" height="14.80" fill="#5aaafa" stroke="#5585bb" stroke-width="1.2" rx="0.4" />
<text x="835.40" y="25.42" font-size="10.6" font-weight="bold" fill="#26466e" text-anchor="middle" textLength="16" lengthAdjust="spacingAndGlyphs">ON</text>
<rect x="859.60" y="14.20" width="61.50" height="14.80" fill="#5aaafa" stroke="#5585bb" stroke-width="1.2" rx="0.4" />
<text x="890.35" y="25.06" font-size="9.6" font-weight="bold" fill="#26466e" text-anchor="middle" textLength="32.3" lengthAdjust="spacingAndGlyphs">Normal</text>
<rect x="925.80" y="14.20" width="61.40" height="14.80" fill="#dfdfdf" stroke="#828282" stroke-width="1.2" rx="0.4" />
<text x="956.50" y="25.06" font-size="9.6" font-weight="bold" fill="#333333" text-anchor="middle" textLength="52.2" lengthAdjust="spacingAndGlyphs">Polyrhythm</text>
<rect x="818.70" y="36.20" width="31.60" height="16.60" fill="#dfdfdf" stroke="#828282" stroke-width="1.2" rx="0.4" />
<text x="834.50" y="48.53" font-size="11.2" font-weight="bold" fill="#333333" text-anchor="middle" >&gt;</text>
<rect x="853.30" y="36.20" width="31.50" height="16.60" fill="#dfdfdf" stroke="#828282" stroke-width="1.2" rx="0.4" />
<text x="869.05" y="48.53" font-size="11.2" font-weight="bold" fill="#333333" text-anchor="middle" >&lt;</text>
<rect x="887.80" y="36.20" width="31.70" height="16.60" fill="#dfdfdf" stroke="#828282" stroke-width="1.2" rx="0.4" />
<text x="903.65" y="48.53" font-size="11.2" font-weight="bold" fill="#333333" text-anchor="middle" >&gt;&lt;1</text>
<rect x="922.50" y="36.20" width="31.50" height="16.60" fill="#5aaafa" stroke="#5585bb" stroke-width="1.2" rx="0.4" />
<text x="938.25" y="48.53" font-size="11.2" font-weight="bold" fill="#26466e" text-anchor="middle" >&gt;&lt;2</text>
<rect x="956.90" y="36.20" width="31.30" height="16.60" fill="#dfdfdf" stroke="#828282" stroke-width="1.2" rx="0.4" />
<text x="972.55" y="48.53" font-size="11.2" font-weight="bold" fill="#333333" text-anchor="middle" >R</text>
<text x="818.90" y="70.50" font-size="9.4" font-weight="normal" fill="#333333" text-anchor="start" textLength="25.2" lengthAdjust="spacingAndGlyphs" stroke="#333" stroke-width="0.4">Speed</text>
<rect x="848.30" y="61.40" width="37.50" height="12.30" fill="#e6e6e6" stroke="#747474" stroke-width="1.1" rx="0.3" />
<text x="850.20" y="70.67" font-size="9.8" font-weight="normal" fill="#333333" text-anchor="start" stroke="#333" stroke-width="0.35">16n</text>
<path d="M876.20,65.75 L883.60,65.75 L879.90,70.35 Z" fill="#333333"/>
<text x="892.00" y="70.50" font-size="9.4" font-weight="normal" fill="#333333" text-anchor="start" textLength="19.6" lengthAdjust="spacingAndGlyphs" stroke="#333" stroke-width="0.4">Start</text>
<rect x="915.70" y="61.40" width="23.20" height="12.30" fill="#e6e6e6" stroke="#747474" stroke-width="1.1" rx="0.3" />
<text x="917.60" y="70.67" font-size="9.8" font-weight="normal" fill="#333333" text-anchor="start" stroke="#333" stroke-width="0.35">1</text>
<path d="M929.30,65.75 L936.70,65.75 L933.00,70.35 Z" fill="#333333"/>
<text x="943.80" y="70.50" font-size="9.4" font-weight="normal" fill="#333333" text-anchor="start" textLength="16.9" lengthAdjust="spacingAndGlyphs" stroke="#333" stroke-width="0.4">Size</text>
<rect x="964.10" y="61.40" width="23.80" height="12.30" fill="#e6e6e6" stroke="#747474" stroke-width="1.1" rx="0.3" />
<text x="966.00" y="70.67" font-size="9.8" font-weight="normal" fill="#333333" text-anchor="start" stroke="#333" stroke-width="0.35">16</text>
<path d="M978.30,65.75 L985.70,65.75 L982.00,70.35 Z" fill="#333333"/>
</g>
<g transform="translate(-0.8,0)">
<rect x="817.60" y="90.60" width="35.60" height="14.80" fill="#5aaafa" stroke="#5585bb" stroke-width="1.2" rx="0.4" />
<text x="835.40" y="101.82" font-size="10.6" font-weight="bold" fill="#26466e" text-anchor="middle" textLength="16" lengthAdjust="spacingAndGlyphs">ON</text>
<rect x="859.60" y="90.60" width="61.50" height="14.80" fill="#5aaafa" stroke="#5585bb" stroke-width="1.2" rx="0.4" />
<text x="890.35" y="101.46" font-size="9.6" font-weight="bold" fill="#26466e" text-anchor="middle" textLength="32.3" lengthAdjust="spacingAndGlyphs">Normal</text>
<rect x="925.80" y="90.60" width="61.40" height="14.80" fill="#dfdfdf" stroke="#828282" stroke-width="1.2" rx="0.4" />
<text x="956.50" y="101.46" font-size="9.6" font-weight="bold" fill="#333333" text-anchor="middle" textLength="52.2" lengthAdjust="spacingAndGlyphs">Polyrhythm</text>
<rect x="818.70" y="112.60" width="31.60" height="16.60" fill="#5aaafa" stroke="#5585bb" stroke-width="1.2" rx="0.4" />
<text x="834.50" y="124.93" font-size="11.2" font-weight="bold" fill="#26466e" text-anchor="middle" >&gt;</text>
<rect x="853.30" y="112.60" width="31.50" height="16.60" fill="#dfdfdf" stroke="#828282" stroke-width="1.2" rx="0.4" />
<text x="869.05" y="124.93" font-size="11.2" font-weight="bold" fill="#333333" text-anchor="middle" >&lt;</text>
<rect x="887.80" y="112.60" width="31.70" height="16.60" fill="#dfdfdf" stroke="#828282" stroke-width="1.2" rx="0.4" />
<text x="903.65" y="124.93" font-size="11.2" font-weight="bold" fill="#333333" text-anchor="middle" >&gt;&lt;1</text>
<rect x="922.50" y="112.60" width="31.50" height="16.60" fill="#dfdfdf" stroke="#828282" stroke-width="1.2" rx="0.4" />
<text x="938.25" y="124.93" font-size="11.2" font-weight="bold" fill="#333333" text-anchor="middle" >&gt;&lt;2</text>
<rect x="956.90" y="112.60" width="31.30" height="16.60" fill="#dfdfdf" stroke="#828282" stroke-width="1.2" rx="0.4" />
<text x="972.55" y="124.93" font-size="11.2" font-weight="bold" fill="#333333" text-anchor="middle" >R</text>
<text x="818.90" y="146.90" font-size="9.4" font-weight="normal" fill="#333333" text-anchor="start" textLength="25.2" lengthAdjust="spacingAndGlyphs" stroke="#333" stroke-width="0.4">Speed</text>
<rect x="848.30" y="137.80" width="37.50" height="12.30" fill="#e6e6e6" stroke="#747474" stroke-width="1.1" rx="0.3" />
<text x="850.20" y="147.07" font-size="9.8" font-weight="normal" fill="#333333" text-anchor="start" stroke="#333" stroke-width="0.35">16n</text>
<path d="M876.20,142.15 L883.60,142.15 L879.90,146.75 Z" fill="#333333"/>
<text x="892.00" y="146.90" font-size="9.4" font-weight="normal" fill="#333333" text-anchor="start" textLength="19.6" lengthAdjust="spacingAndGlyphs" stroke="#333" stroke-width="0.4">Start</text>
<rect x="915.70" y="137.80" width="23.20" height="12.30" fill="#e6e6e6" stroke="#747474" stroke-width="1.1" rx="0.3" />
<text x="917.60" y="147.07" font-size="9.8" font-weight="normal" fill="#333333" text-anchor="start" stroke="#333" stroke-width="0.35">1</text>
<path d="M929.30,142.15 L936.70,142.15 L933.00,146.75 Z" fill="#333333"/>
<text x="943.80" y="146.90" font-size="9.4" font-weight="normal" fill="#333333" text-anchor="start" textLength="16.9" lengthAdjust="spacingAndGlyphs" stroke="#333" stroke-width="0.4">Size</text>
<rect x="964.10" y="137.80" width="23.80" height="12.30" fill="#e6e6e6" stroke="#747474" stroke-width="1.1" rx="0.3" />
<text x="966.00" y="147.07" font-size="9.8" font-weight="normal" fill="#333333" text-anchor="start" stroke="#333" stroke-width="0.35">16</text>
<path d="M978.30,142.15 L985.70,142.15 L982.00,146.75 Z" fill="#333333"/>
</g>
<g transform="translate(0.0,0)">
<rect x="817.60" y="445.00" width="35.60" height="14.80" fill="#5aaafa" stroke="#5585bb" stroke-width="1.2" rx="0.4" />
<text x="835.40" y="456.22" font-size="10.6" font-weight="bold" fill="#26466e" text-anchor="middle" textLength="16" lengthAdjust="spacingAndGlyphs">ON</text>
<rect x="859.60" y="445.00" width="61.50" height="14.80" fill="#5aaafa" stroke="#5585bb" stroke-width="1.2" rx="0.4" />
<text x="890.35" y="455.86" font-size="9.6" font-weight="bold" fill="#26466e" text-anchor="middle" textLength="32.3" lengthAdjust="spacingAndGlyphs">Normal</text>
<rect x="925.80" y="445.00" width="61.40" height="14.80" fill="#dfdfdf" stroke="#828282" stroke-width="1.2" rx="0.4" />
<text x="956.50" y="455.86" font-size="9.6" font-weight="bold" fill="#333333" text-anchor="middle" textLength="52.2" lengthAdjust="spacingAndGlyphs">Polyrhythm</text>
<rect x="818.70" y="467.00" width="31.60" height="16.60" fill="#dfdfdf" stroke="#828282" stroke-width="1.2" rx="0.4" />
<text x="834.50" y="479.33" font-size="11.2" font-weight="bold" fill="#333333" text-anchor="middle" >&gt;</text>
<rect x="853.30" y="467.00" width="31.50" height="16.60" fill="#dfdfdf" stroke="#828282" stroke-width="1.2" rx="0.4" />
<text x="869.05" y="479.33" font-size="11.2" font-weight="bold" fill="#333333" text-anchor="middle" >&lt;</text>
<rect x="887.80" y="467.00" width="31.70" height="16.60" fill="#5aaafa" stroke="#5585bb" stroke-width="1.2" rx="0.4" />
<text x="903.65" y="479.33" font-size="11.2" font-weight="bold" fill="#26466e" text-anchor="middle" >&gt;&lt;1</text>
<rect x="922.50" y="467.00" width="31.50" height="16.60" fill="#dfdfdf" stroke="#828282" stroke-width="1.2" rx="0.4" />
<text x="938.25" y="479.33" font-size="11.2" font-weight="bold" fill="#333333" text-anchor="middle" >&gt;&lt;2</text>
<rect x="956.90" y="467.00" width="31.30" height="16.60" fill="#dfdfdf" stroke="#828282" stroke-width="1.2" rx="0.4" />
<text x="972.55" y="479.33" font-size="11.2" font-weight="bold" fill="#333333" text-anchor="middle" >R</text>
<text x="818.90" y="501.30" font-size="9.4" font-weight="normal" fill="#333333" text-anchor="start" textLength="25.2" lengthAdjust="spacingAndGlyphs" stroke="#333" stroke-width="0.4">Speed</text>
<rect x="848.30" y="492.20" width="37.50" height="12.30" fill="#e6e6e6" stroke="#747474" stroke-width="1.1" rx="0.3" />
<text x="850.20" y="501.47" font-size="9.8" font-weight="normal" fill="#333333" text-anchor="start" stroke="#333" stroke-width="0.35">16n</text>
<path d="M876.20,496.55 L883.60,496.55 L879.90,501.15 Z" fill="#333333"/>
<text x="892.00" y="501.30" font-size="9.4" font-weight="normal" fill="#333333" text-anchor="start" textLength="19.6" lengthAdjust="spacingAndGlyphs" stroke="#333" stroke-width="0.4">Start</text>
<rect x="915.70" y="492.20" width="23.20" height="12.30" fill="#e6e6e6" stroke="#747474" stroke-width="1.1" rx="0.3" />
<text x="917.60" y="501.47" font-size="9.8" font-weight="normal" fill="#333333" text-anchor="start" stroke="#333" stroke-width="0.35">1</text>
<path d="M929.30,496.55 L936.70,496.55 L933.00,501.15 Z" fill="#333333"/>
<text x="943.80" y="501.30" font-size="9.4" font-weight="normal" fill="#333333" text-anchor="start" textLength="16.9" lengthAdjust="spacingAndGlyphs" stroke="#333" stroke-width="0.4">Size</text>
<rect x="964.10" y="492.20" width="23.80" height="12.30" fill="#e6e6e6" stroke="#747474" stroke-width="1.1" rx="0.3" />
<text x="966.00" y="501.47" font-size="9.8" font-weight="normal" fill="#333333" text-anchor="start" stroke="#333" stroke-width="0.35">16</text>
<path d="M978.30,496.55 L985.70,496.55 L982.00,501.15 Z" fill="#333333"/>
</g>
<rect x="816.20" y="512.00" width="174.60" height="4.00" fill="#8ec2f4" />
<rect x="816.10" y="163.80" width="32.00" height="15.40" fill="#5aaafa" stroke="#5585bb" stroke-width="1.2" rx="0.4" />
<text x="832.10" y="174.81" font-size="9.2" font-weight="bold" fill="#26466e" text-anchor="middle" >Start</text>
<rect x="851.40" y="163.80" width="32.80" height="15.40" fill="#dfdfdf" stroke="#828282" stroke-width="1.2" rx="0.4" />
<text x="867.80" y="174.81" font-size="9.2" font-weight="bold" fill="#333333" text-anchor="middle" >Playbk</text>
<rect x="887.50" y="163.80" width="32.00" height="15.40" fill="#dfdfdf" stroke="#828282" stroke-width="1.2" rx="0.4" />
<text x="903.50" y="174.81" font-size="9.2" font-weight="bold" fill="#333333" text-anchor="middle" >Pitch</text>
<rect x="923.00" y="163.80" width="32.00" height="15.40" fill="#dfdfdf" stroke="#828282" stroke-width="1.2" rx="0.4" />
<text x="939.00" y="174.81" font-size="9.2" font-weight="bold" fill="#333333" text-anchor="middle" >Pan</text>
<rect x="959.20" y="163.80" width="32.00" height="15.40" fill="#dfdfdf" stroke="#828282" stroke-width="1.2" rx="0.4" />
<text x="975.20" y="174.81" font-size="9.2" font-weight="bold" fill="#333333" text-anchor="middle" >Vol</text>
<text x="839.40" y="208.40" font-size="18.4" font-weight="bold" fill="#2e2e2e" text-anchor="middle" textLength="12.4" lengthAdjust="spacingAndGlyphs">R</text>
<text x="878.20" y="208.40" font-size="18.4" font-weight="bold" fill="#2e2e2e" text-anchor="middle" textLength="12.4" lengthAdjust="spacingAndGlyphs">C</text>
<g transform="translate(917.50,195.50) rotate(180)"><path d="M-4.50,-1.25 L0.50,-1.25 L-0.40,-4.70 L4.50,0 L-0.40,4.70 L0.50,1.25 L-4.50,1.25 Z" fill="#333333"/></g>
<g transform="translate(937.30,195.50) rotate(-90)"><path d="M-5.50,-1.25 L0.50,-1.25 L-0.40,-3.75 L5.50,0 L-0.40,3.75 L0.50,1.25 L-5.50,1.25 Z" fill="#333333"/></g>
<g transform="translate(957.10,195.50) rotate(90)"><path d="M-5.50,-1.25 L0.50,-1.25 L-0.40,-3.75 L5.50,0 L-0.40,3.75 L0.50,1.25 L-5.50,1.25 Z" fill="#333333"/></g>
<g transform="translate(977.00,195.50) rotate(0)"><path d="M-4.50,-1.25 L0.50,-1.25 L-0.40,-4.70 L4.50,0 L-0.40,4.70 L0.50,1.25 L-4.50,1.25 Z" fill="#333333"/></g>
<g transform="translate(917.50,230.30) rotate(180)"><path d="M-4.50,-1.25 L0.50,-1.25 L-0.40,-4.70 L4.50,0 L-0.40,4.70 L0.50,1.25 L-4.50,1.25 Z" fill="#333333"/></g>
<g transform="translate(937.30,230.30) rotate(-90)"><path d="M-5.50,-1.25 L0.50,-1.25 L-0.40,-3.75 L5.50,0 L-0.40,3.75 L0.50,1.25 L-5.50,1.25 Z" fill="#333333"/></g>
<g transform="translate(957.10,230.30) rotate(90)"><path d="M-5.50,-1.25 L0.50,-1.25 L-0.40,-3.75 L5.50,0 L-0.40,3.75 L0.50,1.25 L-5.50,1.25 Z" fill="#333333"/></g>
<g transform="translate(977.00,230.30) rotate(0)"><path d="M-4.50,-1.25 L0.50,-1.25 L-0.40,-4.70 L4.50,0 L-0.40,4.70 L0.50,1.25 L-4.50,1.25 Z" fill="#333333"/></g>
<text x="947.00" y="215.80" font-size="9.4" font-weight="bold" fill="#333333" text-anchor="middle" >Shift</text>
<rect x="823.50" y="223.40" width="73.00" height="12.20" fill="#e6e6e6" stroke="#747474" stroke-width="1.1" rx="0.3" />
<text x="826.30" y="232.60" font-size="9.3" font-weight="bold" fill="#333333" text-anchor="start" textLength="44" lengthAdjust="spacingAndGlyphs">RowSize8</text>
<path d="M886.50,227.90 L893.90,227.90 L890.20,232.50 Z" fill="#333333"/>
<clipPath id="wclip"><rect x="811.6" y="246.4" width="184.2" height="54.6"/></clipPath>
<polyline clip-path="url(#wclip)" points="811.0,262.0 812.2,240.0 812.7,240.0 813.6,307.0 814.2,307.0 815.1,240.0 815.9,240.0 816.8,307.0 817.4,307.0 818.3,240.0 823.7,240.0 824.6,307.0 825.2,307.0 826.1,240.0 826.4,240.0 827.3,307.0 827.9,307.0 828.8,240.0 829.7,240.0 830.6,307.0 831.2,307.0 832.1,240.0 835.6,240.0 836.5,307.0 837.1,307.0 838.0,240.0 838.6,240.0 839.5,307.0 840.1,307.0 841.0,240.0 847.7,240.0 848.6,307.0 849.2,307.0 850.1,240.0 851.0,240.0 851.6,250.5 853.0,248.2 856.0,250.0 859.4,254.5 861.8,292.5 866.2,263.0 870.8,252.5 873.9,299.5 875.8,240.0 876.1,307.0 877.1,240.0 878.8,240.0 879.7,307.0 880.3,307.0 881.2,240.0 882.2,240.0 883.1,307.0 883.7,307.0 884.6,240.0 885.4,240.0 886.3,307.0 886.9,307.0 887.8,240.0 888.7,240.0 889.6,307.0 890.2,307.0 891.1,240.0 896.3,240.0 897.2,307.0 897.8,307.0 898.7,240.0 901.0,240.0 901.9,307.0 902.5,307.0 903.4,240.0 904.1,240.0 905.0,307.0 905.6,307.0 906.5,240.0 908.6,240.0 909.5,307.0 910.1,307.0 911.0,240.0 911.8,240.0 912.7,307.0 912.8,307.0 914.6,249.0 917.5,297.0 919.4,254.0 922.2,293.6 924.5,253.5 929.8,264.0 933.1,284.0 934.8,281.5 936.6,240.0 937.1,240.0 938.1,307.0 938.8,307.0 939.7,240.0 940.8,240.0 941.8,307.0 943.6,307.0 944.6,240.0 945.1,240.0 946.1,307.0 946.5,307.0 947.5,240.0 949.3,240.0 950.2,307.0 952.2,307.0 953.2,240.0 953.8,240.0 954.7,307.0 955.0,307.0 956.0,240.0 958.8,240.0 959.8,307.0 960.3,307.0 961.2,240.0 962.8,240.0 963.7,307.0 965.5,307.0 966.5,240.0 968.4,240.0 969.4,307.0 969.8,307.0 970.7,240.0 970.8,240.0 971.8,307.0 973.1,307.0 974.1,240.0 976.0,240.0 977.0,307.0 977.1,307.0 978.1,240.0 978.2,240.0 979.0,307.0 980.4,307.0 982.5,262.0 984.7,254.0 987.0,253.5 989.1,249.7 991.3,286.0 993.0,264.0 994.2,283.0 995.5,270.0" fill="none" stroke="#4a90da" stroke-width="1.1" stroke-opacity="0.82" stroke-linejoin="round"/>
<rect x="810.90" y="301.20" width="184.90" height="26.00" fill="#dadada" />
<rect x="810.90" y="301.20" width="35.00" height="26.00" fill="#5aaafa" />
<rect x="902.10" y="301.20" width="34.90" height="26.00" fill="#5aaafa" />
<text x="828.50" y="318.20" font-size="10.4" font-weight="bold" fill="#eef4fb" text-anchor="middle" >Rev</text>
<text x="919.60" y="318.20" font-size="10.4" font-weight="bold" fill="#eef4fb" text-anchor="middle" >Mute</text>
<text x="862.00" y="318.30" font-size="10.6" font-weight="bold" fill="#2e2e2e" text-anchor="middle" >R</text>
<text x="886.00" y="318.30" font-size="10.6" font-weight="bold" fill="#2e2e2e" text-anchor="middle" >C</text>
<text x="954.90" y="318.30" font-size="10.6" font-weight="bold" fill="#2e2e2e" text-anchor="middle" >R</text>
<text x="978.40" y="318.30" font-size="10.6" font-weight="bold" fill="#2e2e2e" text-anchor="middle" >C</text>
<line x1="810.9" y1="327.4" x2="995.8" y2="327.4" stroke="#b4b4b4" stroke-width="1"/>
<text x="836.70" y="354.90" font-size="18.4" font-weight="bold" fill="#2e2e2e" text-anchor="middle" textLength="12.4" lengthAdjust="spacingAndGlyphs">R</text>
<text x="874.90" y="354.90" font-size="18.4" font-weight="bold" fill="#2e2e2e" text-anchor="middle" textLength="12.4" lengthAdjust="spacingAndGlyphs">C</text>
<text x="947.00" y="343.30" font-size="9.4" font-weight="bold" fill="#333333" text-anchor="middle" >Shift</text>
<g transform="translate(915.80,355.70) rotate(180)"><path d="M-4.50,-1.25 L0.50,-1.25 L-0.40,-4.70 L4.50,0 L-0.40,4.70 L0.50,1.25 L-4.50,1.25 Z" fill="#333333"/></g>
<g transform="translate(936.30,355.70) rotate(-90)"><path d="M-5.50,-1.25 L0.50,-1.25 L-0.40,-3.75 L5.50,0 L-0.40,3.75 L0.50,1.25 L-5.50,1.25 Z" fill="#333333"/></g>
<g transform="translate(957.10,355.70) rotate(90)"><path d="M-5.50,-1.25 L0.50,-1.25 L-0.40,-3.75 L5.50,0 L-0.40,3.75 L0.50,1.25 L-5.50,1.25 Z" fill="#333333"/></g>
<g transform="translate(977.70,355.70) rotate(0)"><path d="M-4.50,-1.25 L0.50,-1.25 L-0.40,-4.70 L4.50,0 L-0.40,4.70 L0.50,1.25 L-4.50,1.25 Z" fill="#333333"/></g>
<line x1="810.9" y1="369.2" x2="995.8" y2="369.2" stroke="#b4b4b4" stroke-width="1"/>
<rect x="813.70" y="372.60" width="178.90" height="62.80" fill="#3b79b9" rx="3.5" />
<circle cx="820.5" cy="379.3" r="2.3" fill="#e8eef5"/>
<circle cx="985.8" cy="379.3" r="2.3" fill="#e8eef5"/>
<circle cx="820.5" cy="428" r="2.3" fill="#e8eef5"/>
<circle cx="985.8" cy="428" r="2.3" fill="#e8eef5"/>
<text x="907.50" y="387.80" font-size="10.4" font-weight="bold" fill="#e6edf5" text-anchor="middle" >Output</text>
<path d="M840.42,416.89 A9.5,9.5 0 1 1 851.58,416.89" fill="none" stroke="#e6edf5" stroke-width="1.9" stroke-linecap="round"/>
<line x1="846.35" y1="408.88" x2="853.06" y2="402.84" stroke="#e6edf5" stroke-width="1.9" stroke-linecap="round"/>
<text x="846.00" y="427.30" font-size="9.7" font-weight="bold" fill="#e6edf5" text-anchor="middle" >Gain</text>
<path d="M880.22,416.89 A9.5,9.5 0 1 1 891.38,416.89" fill="none" stroke="#e6edf5" stroke-width="1.9" stroke-linecap="round"/>
<line x1="885.80" y1="409.20" x2="881.34" y2="400.81" stroke="#e6edf5" stroke-width="1.9" stroke-linecap="round"/>
<path d="M881.40,394.20 L890.20,394.20 L885.80,398.40 Z" fill="#e6edf5"/>
<text x="885.80" y="427.30" font-size="9.7" font-weight="bold" fill="#e6edf5" text-anchor="middle" >Wid</text>
<path d="M919.72,416.89 A9.5,9.5 0 1 1 930.88,416.89" fill="none" stroke="#e6edf5" stroke-width="1.9" stroke-linecap="round"/>
<line x1="925.30" y1="409.20" x2="925.30" y2="398.27" stroke="#e6edf5" stroke-width="1.9" stroke-linecap="round"/>
<path d="M920.90,394.20 L929.70,394.20 L925.30,398.40 Z" fill="#e6edf5"/>
<text x="925.30" y="427.30" font-size="9.7" font-weight="bold" fill="#e6edf5" text-anchor="middle" >Pan</text>
<path d="M958.92,416.89 A9.5,9.5 0 1 1 970.08,416.89" fill="none" stroke="#e6edf5" stroke-width="1.9" stroke-linecap="round"/>
<line x1="964.72" y1="409.62" x2="968.96" y2="417.59" stroke="#e6edf5" stroke-width="1.9" stroke-linecap="round"/>
<text x="964.50" y="427.30" font-size="9.7" font-weight="bold" fill="#e6edf5" text-anchor="middle" >Vol</text>
<rect x="12.20" y="475.50" width="19.80" height="23.70" fill="#9dc4ee" />
<rect x="12.20" y="475.10" width="19.80" height="2.00" fill="#5aa5f3" />
<text x="22.10" y="496.40" font-size="9" font-weight="normal" fill="#62799a" text-anchor="middle" stroke="#62799a" stroke-width="0.3">1</text>
<rect x="35.34" y="443.50" width="19.80" height="55.70" fill="#9dc4ee" />
<rect x="35.34" y="443.10" width="19.80" height="2.00" fill="#5aa5f3" />
<text x="45.24" y="496.40" font-size="9" font-weight="normal" fill="#62799a" text-anchor="middle" stroke="#62799a" stroke-width="0.3">2</text>
<rect x="58.48" y="495.70" width="19.80" height="3.50" fill="#9dc4ee" />
<rect x="58.48" y="495.30" width="19.80" height="2.00" fill="#5aa5f3" />
<text x="68.38" y="496.40" font-size="9" font-weight="normal" fill="#565f6c" text-anchor="middle" stroke="#62799a" stroke-width="0.3">3</text>
<rect x="81.62" y="443.50" width="19.80" height="55.70" fill="#9dc4ee" />
<rect x="81.62" y="443.10" width="19.80" height="2.00" fill="#5aa5f3" />
<text x="91.52" y="496.40" font-size="9" font-weight="normal" fill="#62799a" text-anchor="middle" stroke="#62799a" stroke-width="0.3">4</text>
<rect x="104.76" y="452.50" width="19.80" height="46.70" fill="#9dc4ee" />
<rect x="104.76" y="452.10" width="19.80" height="2.00" fill="#5aa5f3" />
<text x="114.66" y="496.40" font-size="9" font-weight="normal" fill="#62799a" text-anchor="middle" stroke="#62799a" stroke-width="0.3">5</text>
<rect x="127.90" y="463.00" width="19.80" height="36.20" fill="#9dc4ee" />
<rect x="127.90" y="462.60" width="19.80" height="2.00" fill="#5aa5f3" />
<text x="137.80" y="496.40" font-size="9" font-weight="normal" fill="#62799a" text-anchor="middle" stroke="#62799a" stroke-width="0.3">6</text>
<rect x="151.04" y="486.00" width="19.80" height="13.20" fill="#9dc4ee" />
<rect x="151.04" y="485.60" width="19.80" height="2.00" fill="#5aa5f3" />
<text x="160.94" y="496.40" font-size="9" font-weight="normal" fill="#62799a" text-anchor="middle" stroke="#62799a" stroke-width="0.3">7</text>
<rect x="174.18" y="463.00" width="19.80" height="36.20" fill="#9dc4ee" />
<rect x="174.18" y="462.60" width="19.80" height="2.00" fill="#5aa5f3" />
<text x="184.08" y="496.40" font-size="9" font-weight="normal" fill="#62799a" text-anchor="middle" stroke="#62799a" stroke-width="0.3">8</text>
<rect x="197.32" y="495.00" width="19.80" height="4.20" fill="#9dc4ee" />
<rect x="197.32" y="494.60" width="19.80" height="2.00" fill="#5aa5f3" />
<text x="207.22" y="496.40" font-size="9" font-weight="normal" fill="#565f6c" text-anchor="middle" stroke="#62799a" stroke-width="0.3">9</text>
<rect x="220.46" y="481.40" width="19.80" height="17.80" fill="#9dc4ee" />
<rect x="220.46" y="481.00" width="19.80" height="2.00" fill="#5aa5f3" />
<text x="230.36" y="496.40" font-size="9" font-weight="normal" fill="#62799a" text-anchor="middle" stroke="#62799a" stroke-width="0.3">10</text>
<rect x="243.60" y="450.90" width="19.80" height="48.30" fill="#9dc4ee" />
<rect x="243.60" y="450.50" width="19.80" height="2.00" fill="#5aa5f3" />
<text x="253.50" y="496.40" font-size="9" font-weight="normal" fill="#62799a" text-anchor="middle" stroke="#62799a" stroke-width="0.3">11</text>
<rect x="266.74" y="493.40" width="19.80" height="5.80" fill="#9dc4ee" />
<rect x="266.74" y="493.00" width="19.80" height="2.00" fill="#5aa5f3" />
<text x="276.64" y="496.40" font-size="9" font-weight="normal" fill="#565f6c" text-anchor="middle" stroke="#62799a" stroke-width="0.3">12</text>
<rect x="289.88" y="458.20" width="19.80" height="41.00" fill="#9dc4ee" />
<rect x="289.88" y="457.80" width="19.80" height="2.00" fill="#5aa5f3" />
<text x="299.78" y="496.40" font-size="9" font-weight="normal" fill="#62799a" text-anchor="middle" stroke="#62799a" stroke-width="0.3">13</text>
<rect x="313.02" y="495.10" width="19.80" height="4.10" fill="#9dc4ee" />
<rect x="313.02" y="494.70" width="19.80" height="2.00" fill="#5aa5f3" />
<text x="322.92" y="496.40" font-size="9" font-weight="normal" fill="#565f6c" text-anchor="middle" stroke="#62799a" stroke-width="0.3">14</text>
<rect x="336.16" y="443.70" width="19.80" height="55.50" fill="#9dc4ee" />
<rect x="336.16" y="443.30" width="19.80" height="2.00" fill="#5aa5f3" />
<text x="346.06" y="496.40" font-size="9" font-weight="normal" fill="#62799a" text-anchor="middle" stroke="#62799a" stroke-width="0.3">15</text>
<rect x="359.30" y="497.70" width="19.80" height="1.50" fill="#9dc4ee" />
<rect x="359.30" y="497.30" width="19.80" height="2.00" fill="#5aa5f3" />
<text x="369.20" y="496.40" font-size="9" font-weight="normal" fill="#565f6c" text-anchor="middle" stroke="#62799a" stroke-width="0.3">16</text>
<rect x="382.44" y="455.30" width="19.80" height="43.90" fill="#9dc4ee" />
<rect x="382.44" y="454.90" width="19.80" height="2.00" fill="#5aa5f3" />
<text x="392.34" y="496.40" font-size="9" font-weight="normal" fill="#62799a" text-anchor="middle" stroke="#62799a" stroke-width="0.3">17</text>
<rect x="405.58" y="443.70" width="19.80" height="55.50" fill="#9dc4ee" />
<rect x="405.58" y="443.30" width="19.80" height="2.00" fill="#5aa5f3" />
<text x="415.48" y="496.40" font-size="9" font-weight="normal" fill="#62799a" text-anchor="middle" stroke="#62799a" stroke-width="0.3">18</text>
<rect x="428.72" y="492.50" width="19.80" height="6.70" fill="#9dc4ee" />
<rect x="428.72" y="492.10" width="19.80" height="2.00" fill="#5aa5f3" />
<text x="438.62" y="496.40" font-size="9" font-weight="normal" fill="#565f6c" text-anchor="middle" stroke="#62799a" stroke-width="0.3">19</text>
<rect x="451.86" y="479.40" width="19.80" height="19.80" fill="#9dc4ee" />
<rect x="451.86" y="479.00" width="19.80" height="2.00" fill="#5aa5f3" />
<text x="461.76" y="496.40" font-size="9" font-weight="normal" fill="#62799a" text-anchor="middle" stroke="#62799a" stroke-width="0.3">20</text>
<rect x="475.00" y="459.00" width="19.80" height="40.20" fill="#9dc4ee" />
<rect x="475.00" y="458.60" width="19.80" height="2.00" fill="#5aa5f3" />
<text x="484.90" y="496.40" font-size="9" font-weight="normal" fill="#62799a" text-anchor="middle" stroke="#62799a" stroke-width="0.3">21</text>
<rect x="498.14" y="455.60" width="19.80" height="43.60" fill="#9dc4ee" />
<rect x="498.14" y="455.20" width="19.80" height="2.00" fill="#5aa5f3" />
<text x="508.04" y="496.40" font-size="9" font-weight="normal" fill="#62799a" text-anchor="middle" stroke="#62799a" stroke-width="0.3">22</text>
<rect x="521.28" y="470.70" width="19.80" height="28.50" fill="#9dc4ee" />
<rect x="521.28" y="470.30" width="19.80" height="2.00" fill="#5aa5f3" />
<text x="531.18" y="496.40" font-size="9" font-weight="normal" fill="#62799a" text-anchor="middle" stroke="#62799a" stroke-width="0.3">23</text>
<rect x="544.42" y="497.40" width="19.80" height="1.80" fill="#9dc4ee" />
<rect x="544.42" y="497.00" width="19.80" height="2.00" fill="#5aa5f3" />
<text x="554.32" y="496.40" font-size="9" font-weight="normal" fill="#565f6c" text-anchor="middle" stroke="#62799a" stroke-width="0.3">24</text>
<rect x="567.56" y="497.40" width="19.80" height="1.80" fill="#9dc4ee" />
<rect x="567.56" y="497.00" width="19.80" height="2.00" fill="#5aa5f3" />
<text x="577.46" y="496.40" font-size="9" font-weight="normal" fill="#565f6c" text-anchor="middle" stroke="#62799a" stroke-width="0.3">25</text>
<rect x="590.70" y="491.00" width="19.80" height="8.20" fill="#9dc4ee" />
<rect x="590.70" y="490.60" width="19.80" height="2.00" fill="#5aa5f3" />
<text x="600.60" y="496.40" font-size="9" font-weight="normal" fill="#565f6c" text-anchor="middle" stroke="#62799a" stroke-width="0.3">26</text>
<rect x="613.84" y="454.10" width="19.80" height="45.10" fill="#9dc4ee" />
<rect x="613.84" y="453.70" width="19.80" height="2.00" fill="#5aa5f3" />
<text x="623.74" y="496.40" font-size="9" font-weight="normal" fill="#62799a" text-anchor="middle" stroke="#62799a" stroke-width="0.3">27</text>
<rect x="636.98" y="476.50" width="19.80" height="22.70" fill="#9dc4ee" />
<rect x="636.98" y="476.10" width="19.80" height="2.00" fill="#5aa5f3" />
<text x="646.88" y="496.40" font-size="9" font-weight="normal" fill="#62799a" text-anchor="middle" stroke="#62799a" stroke-width="0.3">28</text>
<rect x="660.12" y="456.20" width="19.80" height="43.00" fill="#9dc4ee" />
<rect x="660.12" y="455.80" width="19.80" height="2.00" fill="#5aa5f3" />
<text x="670.02" y="496.40" font-size="9" font-weight="normal" fill="#62799a" text-anchor="middle" stroke="#62799a" stroke-width="0.3">29</text>
<rect x="683.26" y="443.70" width="19.80" height="55.50" fill="#9dc4ee" />
<rect x="683.26" y="443.30" width="19.80" height="2.00" fill="#5aa5f3" />
<text x="693.16" y="496.40" font-size="9" font-weight="normal" fill="#62799a" text-anchor="middle" stroke="#62799a" stroke-width="0.3">30</text>
<rect x="706.40" y="497.40" width="19.80" height="1.80" fill="#9dc4ee" />
<rect x="706.40" y="497.00" width="19.80" height="2.00" fill="#5aa5f3" />
<text x="716.30" y="496.40" font-size="9" font-weight="normal" fill="#565f6c" text-anchor="middle" stroke="#62799a" stroke-width="0.3">31</text>
<rect x="729.54" y="497.40" width="19.80" height="1.80" fill="#9dc4ee" />
<rect x="729.54" y="497.00" width="19.80" height="2.00" fill="#5aa5f3" />
<text x="739.44" y="496.40" font-size="9" font-weight="normal" fill="#565f6c" text-anchor="middle" stroke="#62799a" stroke-width="0.3">32</text>
<rect x="56.70" y="441.50" width="20.60" height="57.30" fill="rgba(246,92,92,0.30)" />
<line x1="10" y1="500.8" x2="752" y2="500.8" stroke="#9a9a9a" stroke-width="1"/>
<line x1="17.6" y1="503" x2="17.6" y2="522" stroke="#bcbcbc" stroke-width="1.2"/>
<line x1="200.8" y1="503" x2="200.8" y2="522" stroke="#bcbcbc" stroke-width="1.2"/>
<line x1="284.3" y1="503" x2="284.3" y2="522" stroke="#bcbcbc" stroke-width="1.2"/>
<line x1="417.7" y1="503" x2="417.7" y2="522" stroke="#bcbcbc" stroke-width="1.2"/>
<line x1="548.5" y1="503" x2="548.5" y2="522" stroke="#bcbcbc" stroke-width="1.2"/>
<line x1="743.8" y1="503" x2="743.8" y2="522" stroke="#bcbcbc" stroke-width="1.2"/>
<text x="30.30" y="515.30" font-size="9.2" font-weight="bold" fill="#454545" text-anchor="start" textLength="76" lengthAdjust="spacingAndGlyphs">Template Pattern</text>
<text x="119.00" y="515.00" font-size="9.2" font-weight="bold" fill="#454545" text-anchor="start" >----</text>
<path d="M181.80,510.70 L187.80,510.70 L184.80,514.50 Z" fill="#333"/>
<text x="217.80" y="515.30" font-size="9.2" font-weight="bold" fill="#454545" text-anchor="start" textLength="29" lengthAdjust="spacingAndGlyphs">Set All</text>
<text x="253.00" y="515.30" font-size="9.2" font-weight="bold" fill="#454545" text-anchor="start" textLength="16" lengthAdjust="spacingAndGlyphs">100</text>
<text x="296.50" y="515.30" font-size="9.2" font-weight="bold" fill="#454545" text-anchor="start" textLength="58.5" lengthAdjust="spacingAndGlyphs">Range 100 %</text>
<text x="379.30" y="515.30" font-size="9.2" font-weight="bold" fill="#454545" text-anchor="middle" >R</text>
<text x="400.50" y="515.30" font-size="9.2" font-weight="bold" fill="#454545" text-anchor="middle" >C</text>
<text x="430.20" y="515.30" font-size="9.2" font-weight="bold" fill="#454545" text-anchor="start" >Shift</text>
<g transform="translate(471.40,511.50) rotate(180)"><path d="M-4.40,-1.25 L0.50,-1.25 L-0.40,-4.00 L4.40,0 L-0.40,4.00 L0.50,1.25 L-4.40,1.25 Z" fill="#333333"/></g>
<g transform="translate(491.10,511.50) rotate(-90)"><path d="M-4.50,-1.25 L0.50,-1.25 L-0.40,-3.70 L4.50,0 L-0.40,3.70 L0.50,1.25 L-4.50,1.25 Z" fill="#333333"/></g>
<g transform="translate(510.80,511.50) rotate(90)"><path d="M-4.50,-1.25 L0.50,-1.25 L-0.40,-3.70 L4.50,0 L-0.40,3.70 L0.50,1.25 L-4.50,1.25 Z" fill="#333333"/></g>
<g transform="translate(530.60,511.50) rotate(0)"><path d="M-4.40,-1.25 L0.50,-1.25 L-0.40,-4.00 L4.40,0 L-0.40,4.00 L0.50,1.25 L-4.40,1.25 Z" fill="#333333"/></g>
<rect x="557.20" y="507.90" width="179.90" height="7.20" fill="#a6ccf2" />
<rect x="758.70" y="443.90" width="43.30" height="15.30" fill="#5aaafa" stroke="#5585bb" stroke-width="1.2" rx="0.4" />
<text x="780.35" y="454.97" font-size="9.5" font-weight="bold" fill="#26466e" text-anchor="middle" >Filter</text>
<rect x="758.70" y="462.65" width="43.30" height="15.30" fill="#dfdfdf" stroke="#828282" stroke-width="1.2" rx="0.4" />
<text x="780.35" y="473.72" font-size="9.5" font-weight="bold" fill="#333333" text-anchor="middle" >Lofi</text>
<rect x="758.70" y="481.40" width="43.30" height="15.30" fill="#dfdfdf" stroke="#828282" stroke-width="1.2" rx="0.4" />
<text x="780.35" y="492.47" font-size="9.5" font-weight="bold" fill="#333333" text-anchor="middle" >Flanger</text>
<rect x="758.70" y="500.15" width="43.30" height="15.30" fill="#dfdfdf" stroke="#828282" stroke-width="1.2" rx="0.4" />
<text x="780.35" y="511.22" font-size="9.5" font-weight="bold" fill="#333333" text-anchor="middle" >Delay</text>
<rect x="6.00" y="528.00" width="225.30" height="31.90" fill="#3a78b9" stroke="#2f659e" stroke-width="1" rx="1" />
<circle cx="11.6" cy="532.4" r="1.7" fill="#2a4a6c"/>
<circle cx="226" cy="532.4" r="1.7" fill="#2a4a6c"/>
<circle cx="11.6" cy="555.7" r="1.7" fill="#2a4a6c"/>
<circle cx="226" cy="555.7" r="1.7" fill="#2a4a6c"/>
<text x="118.50" y="550.20" font-size="18.2" font-weight="bold" fill="#dbe4ee" text-anchor="middle" textLength="172.5" lengthAdjust="spacingAndGlyphs">SAMPLE TRIGGER 2</text>
<text x="250.40" y="549.20" font-size="14.4" font-weight="bold" fill="#e4e4e4" text-anchor="start" textLength="33.5" lengthAdjust="spacingAndGlyphs">Save</text>
<text x="534.40" y="549.20" font-size="14.4" font-weight="bold" fill="#e4e4e4" text-anchor="start" textLength="33.5" lengthAdjust="spacingAndGlyphs">Load</text>
<rect x="296.60" y="532.50" width="22.60" height="23.20" fill="#3e3e3e" stroke="#6c6c6c" stroke-width="1" />
<rect x="296.10" y="551.40" width="23.60" height="4.80" fill="#466f9f" />
<text x="307.90" y="550.00" font-size="15.5" font-weight="normal" fill="#d6d6d6" text-anchor="middle" stroke="#d6d6d6" stroke-width="0.5">1</text>
<rect x="323.88" y="532.50" width="22.60" height="23.20" fill="#3e3e3e" stroke="#6c6c6c" stroke-width="1" />
<rect x="323.38" y="551.40" width="23.60" height="4.80" fill="#466f9f" />
<text x="335.18" y="550.00" font-size="15.5" font-weight="normal" fill="#d6d6d6" text-anchor="middle" stroke="#d6d6d6" stroke-width="0.5">2</text>
<rect x="351.16" y="532.50" width="22.60" height="23.20" fill="#3e3e3e" stroke="#6c6c6c" stroke-width="1" />
<rect x="350.66" y="551.40" width="23.60" height="4.80" fill="#466f9f" />
<text x="362.46" y="550.00" font-size="15.5" font-weight="normal" fill="#d6d6d6" text-anchor="middle" stroke="#d6d6d6" stroke-width="0.5">3</text>
<rect x="378.44" y="532.50" width="22.60" height="23.20" fill="#3e3e3e" stroke="#6c6c6c" stroke-width="1" />
<text x="389.74" y="550.00" font-size="15.5" font-weight="normal" fill="#d6d6d6" text-anchor="middle" stroke="#d6d6d6" stroke-width="0.5">4</text>
<rect x="405.72" y="532.50" width="22.60" height="23.20" fill="#3e3e3e" stroke="#6c6c6c" stroke-width="1" />
<text x="417.02" y="550.00" font-size="15.5" font-weight="normal" fill="#d6d6d6" text-anchor="middle" stroke="#d6d6d6" stroke-width="0.5">5</text>
<rect x="433.00" y="532.50" width="22.60" height="23.20" fill="#3e3e3e" stroke="#6c6c6c" stroke-width="1" />
<text x="444.30" y="550.00" font-size="15.5" font-weight="normal" fill="#d6d6d6" text-anchor="middle" stroke="#d6d6d6" stroke-width="0.5">6</text>
<rect x="460.28" y="532.50" width="22.60" height="23.20" fill="#3e3e3e" stroke="#6c6c6c" stroke-width="1" />
<text x="471.58" y="550.00" font-size="15.5" font-weight="normal" fill="#d6d6d6" text-anchor="middle" stroke="#d6d6d6" stroke-width="0.5">7</text>
<rect x="487.56" y="532.50" width="22.60" height="23.20" fill="#3e3e3e" stroke="#6c6c6c" stroke-width="1" />
<text x="498.86" y="550.00" font-size="15.5" font-weight="normal" fill="#d6d6d6" text-anchor="middle" stroke="#d6d6d6" stroke-width="0.5">8</text>
<rect x="579.70" y="532.50" width="22.60" height="23.20" fill="#3e3e3e" stroke="#6c6c6c" stroke-width="1" />
<text x="591.00" y="550.00" font-size="15.5" font-weight="normal" fill="#d6d6d6" text-anchor="middle" stroke="#d6d6d6" stroke-width="0.5">1</text>
<rect x="606.96" y="532.50" width="22.60" height="23.20" fill="#3e3e3e" stroke="#6c6c6c" stroke-width="1" />
<text x="618.26" y="550.00" font-size="15.5" font-weight="normal" fill="#d6d6d6" text-anchor="middle" stroke="#d6d6d6" stroke-width="0.5">2</text>
<rect x="633.72" y="532.00" width="23.80" height="24.20" fill="#5aaafa" />
<text x="645.62" y="550.00" font-size="15.5" font-weight="normal" fill="#2a4a70" text-anchor="middle" stroke="#2a4a70" stroke-width="0.4">3</text>
<rect x="661.48" y="532.50" width="22.60" height="23.20" fill="#3e3e3e" stroke="#6c6c6c" stroke-width="1" />
<text x="672.78" y="550.00" font-size="15.5" font-weight="normal" fill="#d6d6d6" text-anchor="middle" stroke="#d6d6d6" stroke-width="0.5">4</text>
<rect x="688.74" y="532.50" width="22.60" height="23.20" fill="#3e3e3e" stroke="#6c6c6c" stroke-width="1" />
<text x="700.04" y="550.00" font-size="15.5" font-weight="normal" fill="#d6d6d6" text-anchor="middle" stroke="#d6d6d6" stroke-width="0.5">5</text>
<rect x="716.00" y="532.50" width="22.60" height="23.20" fill="#3e3e3e" stroke="#6c6c6c" stroke-width="1" />
<text x="727.30" y="550.00" font-size="15.5" font-weight="normal" fill="#d6d6d6" text-anchor="middle" stroke="#d6d6d6" stroke-width="0.5">6</text>
<rect x="743.26" y="532.50" width="22.60" height="23.20" fill="#3e3e3e" stroke="#6c6c6c" stroke-width="1" />
<text x="754.56" y="550.00" font-size="15.5" font-weight="normal" fill="#d6d6d6" text-anchor="middle" stroke="#d6d6d6" stroke-width="0.5">7</text>
<rect x="770.52" y="532.50" width="22.60" height="23.20" fill="#3e3e3e" stroke="#6c6c6c" stroke-width="1" />
<text x="781.82" y="550.00" font-size="15.5" font-weight="normal" fill="#d6d6d6" text-anchor="middle" stroke="#d6d6d6" stroke-width="0.5">8</text>
<rect x="818.60" y="529.60" width="80.70" height="27.70" fill="#5aaafa" />
<text x="858.80" y="548.70" font-size="16.4" font-weight="bold" fill="#26466e" text-anchor="middle" textLength="35" lengthAdjust="spacingAndGlyphs">Main</text>
<rect x="907.00" y="529.60" width="80.70" height="27.50" fill="#dadada" />
<text x="946.90" y="548.70" font-size="16.4" font-weight="bold" fill="#3a3a3a" text-anchor="middle" textLength="53" lengthAdjust="spacingAndGlyphs">Setting</text></svg></body></html>
